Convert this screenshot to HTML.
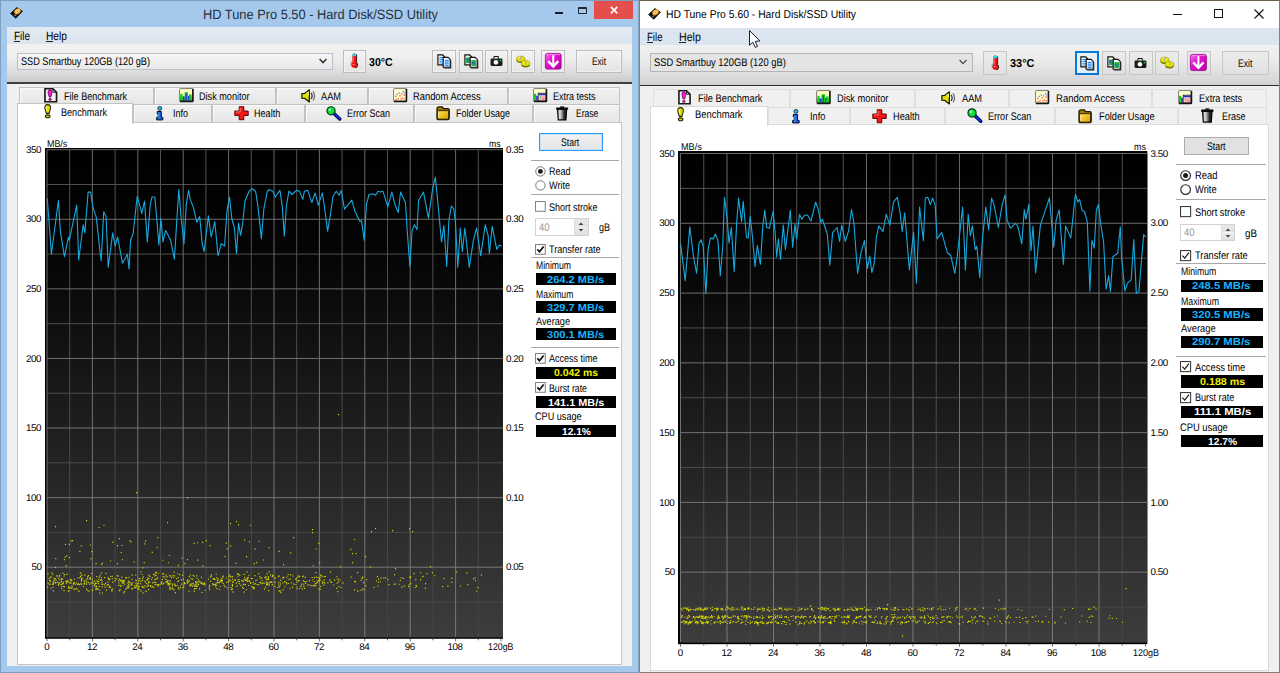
<!DOCTYPE html>
<html><head><meta charset="utf-8"><title>HD Tune Pro</title><style>
html,body{margin:0;padding:0;}
body{width:1280px;height:673px;overflow:hidden;background:#fff;font-family:"Liberation Sans", sans-serif;position:relative;}
#r{position:absolute;left:0;top:0;width:1280px;height:673px;overflow:hidden;}
#r div,#r span,#r svg{position:absolute;}
.t{white-space:pre;line-height:1;color:#000;text-rendering:geometricPrecision;}
.ic{overflow:visible;}
.win8{left:0;top:0;width:639px;height:673px;background:#a5c9ec;box-sizing:border-box;border:1px solid #7f9fc2;border-right-color:#8aa3bd;}
.w8client{left:7px;top:27px;width:625px;height:639px;background:#f0f0f0;}
.w8menu{left:7px;top:27px;width:625px;height:17px;background:linear-gradient(#e3eaf2,#dbe5ef);}
.w8tool{left:7px;top:44px;width:625px;height:39px;background:linear-gradient(#f2f1f0 0%,#eeeeee 35%,#dedede 70%,#c8c8c8 100%);}
.w8toolline{left:7px;top:82.35px;width:625px;height:1.3px;background:#404040;}
.tab8{box-sizing:border-box;border:1px solid #c2c2c2;border-bottom:none;background:linear-gradient(#f2f2f2,#e6e6e6);box-shadow:inset 1px 1px 0 #fafafa;}
.pane8{box-sizing:border-box;border:1px solid #c4c4c4;background:#fff;}
.sel8{box-sizing:border-box;border:1px solid #c4c4c4;border-bottom:none;background:#fff;}
.win10{left:639px;top:0;width:641px;height:673px;background:#f0f0f0;box-sizing:border-box;border:1px solid #8b7f6e;border-top-color:#6a5d4c;}
.w10title{left:640px;top:1px;width:639px;height:27px;background:#fff;}
.w10menu{left:640px;top:28px;width:639px;height:16.6px;background:#dbe5ef;}
.w10tool{left:640px;top:44.6px;width:639px;height:40px;background:linear-gradient(#f1f1f1 0%,#ebebeb 40%,#d2d2d2 100%);}
.w10toolline{left:640px;top:84.6px;width:639px;height:1.4px;background:#2c2c2c;}
.tab10{box-sizing:border-box;border:1px solid #dfdfdf;border-bottom:none;background:#f0f0f0;}
.pane10{box-sizing:border-box;border:1px solid #dadada;background:#fff;}
.sel10{box-sizing:border-box;border:1px solid #dadada;border-bottom:none;background:#fff;}
</style></head><body><div id="r">
<svg class="ic" style="left:0;top:0" width="0" height="0"><defs><linearGradient id="pg" x1="0" y1="0" x2="1" y2="1"><stop offset="0" stop-color="#ff70f4"/><stop offset="0.4" stop-color="#e414cc"/><stop offset="1" stop-color="#b400a4"/></linearGradient><radialGradient id="plat" cx="0.5" cy="0.45" r="0.6"><stop offset="0" stop-color="#ffe9a8"/><stop offset="0.55" stop-color="#fbb845"/><stop offset="1" stop-color="#e88a18"/></radialGradient><linearGradient id="fold" x1="0" y1="0" x2="1" y2="1"><stop offset="0" stop-color="#ffe050"/><stop offset="1" stop-color="#d8a400"/></linearGradient><linearGradient id="bin" x1="0" y1="0" x2="1" y2="0"><stop offset="0" stop-color="#7a7a7a"/><stop offset="0.25" stop-color="#e4e4e4"/><stop offset="0.5" stop-color="#8c8c8c"/><stop offset="0.72" stop-color="#2a2a2a"/><stop offset="1" stop-color="#1a1a1a"/></linearGradient></defs></svg>
<div class="win8"></div>
<div class="w8client"></div>
<div class="w8menu"></div>
<div class="w8tool"></div>
<div class="w8toolline"></div>
<svg class="ic" style="left:9.6px;top:7.2px" width="13" height="11.8" viewBox="0 0 13 12" preserveAspectRatio="none">
<polygon points="0.6,6.6 6.9,0.6 12.4,4.3 5.8,11.4" fill="#14110e" stroke="#14110e" stroke-width="0.9" stroke-linejoin="round"/>
<ellipse cx="7.5" cy="4.5" rx="3.5" ry="2.6" transform="rotate(-36 7.5 4.5)" fill="url(#plat)"/>
<ellipse cx="7.6" cy="4.3" rx="0.9" ry="0.7" transform="rotate(-36 7.6 4.3)" fill="#8c9cc0"/>
<ellipse cx="5.3" cy="8.3" rx="1.3" ry="0.6" transform="rotate(-36 5.3 8.3)" fill="#c88a58"/>
</svg>
<span class="t" style="left:202.50px;top:8px;font-size:13.6px;color:#25303c;transform:scaleX(0.9427);transform-origin:0 0;">HD Tune Pro 5.50 - Hard Disk/SSD Utility</span>
<span class="t" style="left:13.50px;top:30px;font-size:12px;transform:scaleX(0.8271);transform-origin:0 0;">File</span>
<span class="t" style="left:45.50px;top:30px;font-size:12px;transform:scaleX(0.8506);transform-origin:0 0;">Help</span>
<div style="left:13.5px;top:40.8px;width:6px;height:1px;background:#222;"></div>
<div style="left:45.5px;top:40.8px;width:7.5px;height:1px;background:#222;"></div>
<div style="left:594px;top:1.2px;width:39px;height:17.4px;background:#e44f4b;"></div>
<svg class="ic" style="left:609.6px;top:6.4px" width="8.2" height="8.2" viewBox="0 0 8.2 8.2"><path d="M0.9,0.9 L7.3,7.3 M7.3,0.9 L0.9,7.3" stroke="#fff" stroke-width="1.7"/></svg>
<div style="left:555px;top:11.5px;width:7.5px;height:2.1px;background:#151a20;border-radius:0.5px;"></div>
<div style="left:577.9px;top:6.6px;width:9.1px;height:7.2px;border:1.2px solid #1c2530;border-top-width:2.2px;box-sizing:border-box;border-radius:1px;"></div>
<div style="left:17px;top:52.5px;width:315.5px;height:17.0px;background:linear-gradient(#f6f6f6,#e9e9e9);border:1px solid #b9c2cc;box-sizing:border-box;"></div>
<svg class="ic" style="left:317.5px;top:57.0px" width="10" height="8" viewBox="0 0 10 8"><path d="M1.6,2 L5,5.6 L8.4,2" fill="none" stroke="#333" stroke-width="1.5"/></svg>
<span class="t" style="left:20.50px;top:57px;font-size:11px;transform:scaleX(0.8307);transform-origin:0 0;">SSD Smartbuy 120GB (120 gB)</span>
<div style="left:342.5px;top:50px;width:23.5px;height:22.5px;border:1px solid #bcbcbc;box-sizing:border-box;background:linear-gradient(#f3f3f3,#e4e4e4);box-shadow:inset 0 0 0 1px rgba(255,255,255,0.4);"></div>
<svg class="ic" style="left:350.25px;top:52.9px" width="8" height="15.3" viewBox="0 0 8 15.5" preserveAspectRatio="none">
<path d="M1.2,8.6 V12.8" stroke="#5aa4ac" stroke-width="1"/>
<rect x="2.3" y="0.5" width="4.2" height="11" rx="1.7" fill="#f01414"/>
<path d="M2.3,3.4 V2.2 Q2.3,0.5 4.4,0.5 Q6.5,0.5 6.5,2.2 V3.4 Z" fill="#20d8e4"/>
<rect x="1.5" y="9.4" width="6" height="5.5" rx="2" fill="#f01414"/>
<path d="M6.6,1.6 V9.8 Q7.7,10.4 7.6,12.6 Q7.4,14.9 5.2,15" fill="none" stroke="#2a0c0c" stroke-width="0.9"/>
<path d="M3.3,3.6 V9.6" stroke="#ff7a7a" stroke-width="0.8"/>
<rect x="2.8" y="11.2" width="1.6" height="1" fill="#ffb0b0"/>
</svg>
<div style="left:432px;top:50px;width:24px;height:22.5px;border:1px solid #bcbcbc;box-sizing:border-box;background:linear-gradient(#f3f3f3,#e4e4e4);box-shadow:inset 0 0 0 1px rgba(255,255,255,0.4);"></div>
<svg class="ic" style="left:436.75px;top:54.25px" width="14.5" height="14" viewBox="0 0 16 15" preserveAspectRatio="none">
<path d="M1,1 H6.2 L8.6,3.2 V11.6 H1 Z" fill="#fff" stroke="#111" stroke-width="1.3"/>
<path d="M2.6,3.8 H7 M2.6,5.8 H7 M2.6,7.8 H7 M2.6,9.6 H7" stroke="#2090ff" stroke-width="1.2"/>
<path d="M6.8,3.6 H12.2 L14.6,5.8 V14.2 H6.8 Z" fill="#fff" stroke="#111" stroke-width="1.3"/>
<path d="M15.2,6.6 V14.9 H7.6" fill="none" stroke="#222" stroke-width="1.1"/>
<path d="M8.4,6.8 H13 M8.4,8.7 H13 M8.4,10.6 H13 M8.4,12.4 H13" stroke="#2090ff" stroke-width="1.2"/>
</svg>
<div style="left:459px;top:50px;width:23.5px;height:22.5px;border:1px solid #bcbcbc;box-sizing:border-box;background:linear-gradient(#f3f3f3,#e4e4e4);box-shadow:inset 0 0 0 1px rgba(255,255,255,0.4);"></div>
<svg class="ic" style="left:463.5px;top:54.25px" width="14.5" height="14" viewBox="0 0 16 15" preserveAspectRatio="none">
<path d="M1,1 H6.2 L8.6,3.2 V11.6 H1 Z" fill="#fff" stroke="#111" stroke-width="1.3"/>
<rect x="2.2" y="3.8" width="5" height="6" fill="#20b040"/>
<rect x="3" y="5" width="2.2" height="2.2" fill="#3060e0"/>
<path d="M6.8,3.6 H12.2 L14.6,5.8 V14.2 H6.8 Z" fill="#fff" stroke="#111" stroke-width="1.3"/>
<path d="M15.2,6.6 V14.9 H7.6" fill="none" stroke="#222" stroke-width="1.1"/>
<rect x="8" y="6.6" width="5.4" height="6.2" fill="#20b040"/>
<rect x="9" y="8.6" width="2.4" height="2.4" fill="#3060e0"/>
</svg>
<div style="left:485px;top:50px;width:23px;height:22.5px;border:1px solid #bcbcbc;box-sizing:border-box;background:linear-gradient(#f3f3f3,#e4e4e4);box-shadow:inset 0 0 0 1px rgba(255,255,255,0.4);"></div>
<svg class="ic" style="left:490.0px;top:56.0px" width="13" height="10.5" viewBox="0 0 14 11" preserveAspectRatio="none">
<path d="M4.2,2.6 V1.2 Q4.2,0.6 4.8,0.6 H8.4 Q9,0.6 9,1.2 V2.6" fill="none" stroke="#111" stroke-width="1.1"/>
<rect x="0.6" y="2.6" width="12.8" height="7.8" rx="1.2" fill="#1a1a1a"/>
<circle cx="6.4" cy="6.6" r="2.9" fill="#e8e8e8" stroke="#000" stroke-width="0.6"/>
<circle cx="6.4" cy="6.6" r="1.6" fill="#fff"/>
<rect x="10.6" y="4" width="1.6" height="1.6" fill="#10e040"/>
</svg>
<div style="left:511px;top:50px;width:23.5px;height:22.5px;border:1px solid #bcbcbc;box-sizing:border-box;background:linear-gradient(#f3f3f3,#e4e4e4);box-shadow:inset 0 0 0 1px rgba(255,255,255,0.4);"></div>
<svg class="ic" style="left:515.5px;top:54.75px" width="14.5" height="13" viewBox="0 0 15 14" preserveAspectRatio="none">
<ellipse cx="4.9" cy="5.7" rx="4.4" ry="3" fill="#6e6c00"/>
<ellipse cx="4.9" cy="4.2" rx="4.4" ry="3" fill="#e6e400" stroke="#8a8600" stroke-width="0.5"/>
<path d="M1.9000000000000004,3.6 Q2.5000000000000004,2.0 4.300000000000001,1.8000000000000003" fill="none" stroke="#ffff80" stroke-width="0.8"/>
<rect x="4.3500000000000005" y="1.8000000000000003" width="1.2" height="3.6" fill="#a8a0ec"/>
<ellipse cx="9.9" cy="10.5" rx="4.4" ry="3" fill="#6e6c00"/>
<ellipse cx="9.9" cy="9.0" rx="4.4" ry="3" fill="#e6e400" stroke="#8a8600" stroke-width="0.5"/>
<path d="M6.9,8.4 Q7.5,6.8 9.3,6.6" fill="none" stroke="#ffff80" stroke-width="0.8"/>
<rect x="9.35" y="6.6" width="1.2" height="3.6" fill="#a8a0ec"/>
</svg>
<div style="left:541px;top:50px;width:24px;height:22.5px;border:1px solid #bcbcbc;box-sizing:border-box;background:linear-gradient(#f3f3f3,#e4e4e4);box-shadow:inset 0 0 0 1px rgba(255,255,255,0.4);"></div>
<svg class="ic" style="left:544.75px;top:53.0px" width="16.5" height="16.5" viewBox="0 0 17 17" preserveAspectRatio="none">
<rect x="0.4" y="0.4" width="16.2" height="16.2" rx="2" fill="url(#pg)" stroke="#98008a" stroke-width="0.8"/>
<path d="M1.4,1.6 H15.6" stroke="#ff9cf6" stroke-width="0.9" opacity="0.8"/>
<path d="M8.5,2.2 V12.4" stroke="#fff" stroke-width="2.1"/>
<path d="M3.3,8.3 L8.5,13.8 L13.7,8.3" fill="none" stroke="#fff" stroke-width="2.5"/>
</svg>
<div style="left:576px;top:50px;width:45.5px;height:22.5px;border:1px solid #bcbcbc;box-sizing:border-box;background:linear-gradient(#f3f3f3,#e4e4e4);box-shadow:inset 0 0 0 1px rgba(255,255,255,0.4);"></div>
<span class="t" style="left:591.50px;top:57px;font-size:11px;transform:scaleX(0.7632);transform-origin:0 0;">Exit</span>
<span class="t" style="left:368.75px;top:58px;font-size:11.5px;font-weight:bold;transform:scaleX(0.9221);transform-origin:0 0;">30°C</span>
<div class="tab8" style="left:19px;top:87px;width:134.5px;height:17px;"></div>
<div class="tab8" style="left:153.5px;top:87px;width:122.5px;height:17px;"></div>
<div class="tab8" style="left:276px;top:87px;width:91.5px;height:17px;"></div>
<div class="tab8" style="left:367.5px;top:87px;width:140.0px;height:17px;"></div>
<div class="tab8" style="left:507.5px;top:87px;width:112.0px;height:17px;"></div>
<div class="tab8" style="left:132.5px;top:104px;width:79.5px;height:18.5px;"></div>
<div class="tab8" style="left:212px;top:104px;width:93px;height:18.5px;"></div>
<div class="tab8" style="left:305px;top:104px;width:108.75px;height:18.5px;"></div>
<div class="tab8" style="left:413.75px;top:104px;width:119.25px;height:18.5px;"></div>
<div class="tab8" style="left:533px;top:104px;width:86.5px;height:18.5px;"></div>
<div class="pane8" style="left:17px;top:122px;width:604.7px;height:542.7px;"></div>
<div class="sel8" style="left:17px;top:103px;width:115.80000000000001px;height:20.5px;"></div>
<svg class="ic" style="left:44px;top:88.3px" width="13.5" height="14.5" viewBox="0 0 14 15" preserveAspectRatio="none">
<path d="M1,0.8 H9.3 L13,4.4 V14.2 H1 Z" fill="#f2f2f2" stroke="#181818" stroke-width="1.7"/>
<path d="M9.3,0.8 V4.4 H13" fill="none" stroke="#181818" stroke-width="1"/>
<path d="M6.3,1.9 C8.4,1.9 8.6,4 8.1,5.9 L7.2,9.3 L5.4,9.3 L4.5,5.9 C4,4 4.2,1.9 6.3,1.9 Z" fill="#ff18e0" stroke="#5a0050" stroke-width="0.8"/>
<ellipse cx="6.3" cy="11.8" rx="1.4" ry="1" fill="#ff18e0" stroke="#5a0050" stroke-width="0.8"/>
</svg>
<span class="t" style="left:64.00px;top:92px;font-size:11px;transform:scaleX(0.8244);transform-origin:0 0;">File Benchmark</span>
<svg class="ic" style="left:179px;top:88.3px" width="15" height="14.5" viewBox="0 0 15 15" preserveAspectRatio="none"><rect x="0.6" y="0.6" width="13.4" height="13.4" rx="0.8" fill="#ffffc0"/>
<rect x="1" y="9" width="12.2" height="4.2" fill="#10d010"/>
<rect x="1.4" y="6" width="2.2" height="7.2" fill="#10d010"/>
<rect x="5.6" y="4.4" width="3.4" height="8.8" fill="#10d010"/>
<rect x="10" y="6.6" width="2.6" height="6.6" fill="#10d010"/>
<rect x="3.8" y="8.6" width="1.7" height="4.6" fill="#3838e0"/>
<rect x="6.6" y="5.6" width="1.3" height="7.6" fill="#3838e0"/>
<rect x="9" y="8" width="1.3" height="5.2" fill="#3838e0"/>
<path d="M0.6,13.6 V1.4 Q0.6,0.6 1.4,0.6 H13.4" fill="none" stroke="#6a6a6a" stroke-width="0.9"/><path d="M13.9,0.9 V13.1 Q13.9,13.9 13.1,13.9 H0.9" fill="none" stroke="#141414" stroke-width="1.7"/></svg>
<span class="t" style="left:199.40px;top:92px;font-size:11px;transform:scaleX(0.8278);transform-origin:0 0;">Disk monitor</span>
<svg class="ic" style="left:301px;top:88.5px" width="15.5" height="14" viewBox="0 0 16 15" preserveAspectRatio="none">
<path d="M0.9,5 L3.8,4.8 L8.6,0.9 L8.6,13.9 L3.8,10 L0.9,9.8 Z" fill="#e6de00" stroke="#1c1c00" stroke-width="1.3" stroke-linejoin="round"/>
<path d="M5.4,4.6 L7.6,2.8 V7" fill="none" stroke="#ffff90" stroke-width="0.8"/>
<path d="M10.4,4.2 Q12.6,7.4 10.4,10.6" fill="none" stroke="#2c2c2c" stroke-width="1.3"/>
<path d="M12.4,2.6 Q15.6,7.4 12.4,12.2" fill="none" stroke="#6a6a6a" stroke-width="1.3"/>
</svg>
<span class="t" style="left:321.00px;top:92px;font-size:11px;transform:scaleX(0.8388);transform-origin:0 0;">AAM</span>
<svg class="ic" style="left:393px;top:88.3px" width="14.5" height="14.5" viewBox="0 0 15 15" preserveAspectRatio="none"><rect x="0.6" y="0.6" width="13.4" height="13.4" rx="0.8" fill="#ffffc8"/>
<g fill="#ff5050"><rect x="2.2" y="8" width="1.4" height="1.4"/><rect x="4.6" y="10.4" width="1.4" height="1.4"/><rect x="6.6" y="7.4" width="1.4" height="1.4"/><rect x="9" y="9.6" width="1.4" height="1.4"/><rect x="10.8" y="6.6" width="1.4" height="1.4"/><rect x="2.6" y="11.2" width="1.4" height="1.2"/><rect x="7.6" y="10.8" width="1.4" height="1.2"/><rect x="10.8" y="10.6" width="1.4" height="1.2"/></g>
<g fill="#7878ff"><rect x="3.6" y="6" width="1.4" height="1.4"/><rect x="5.8" y="4.6" width="1.4" height="1.4"/><rect x="8.2" y="5.4" width="1.4" height="1.4"/><rect x="10" y="3.2" width="1.4" height="1.4"/><rect x="11.4" y="4.6" width="1.2" height="1.2"/></g>
<path d="M0.6,13.6 V1.4 Q0.6,0.6 1.4,0.6 H13.4" fill="none" stroke="#6a6a6a" stroke-width="0.9"/><path d="M13.9,0.9 V13.1 Q13.9,13.9 13.1,13.9 H0.9" fill="none" stroke="#141414" stroke-width="1.7"/></svg>
<span class="t" style="left:413.00px;top:92px;font-size:11px;transform:scaleX(0.8505);transform-origin:0 0;">Random Access</span>
<svg class="ic" style="left:533px;top:88.3px" width="14.5" height="14.5" viewBox="0 0 15 15" preserveAspectRatio="none"><rect x="0.6" y="0.6" width="13.4" height="13.4" rx="0.8" fill="#ffffc8"/>
<rect x="1" y="6" width="2.2" height="7.2" fill="#10d010"/>
<rect x="3.2" y="8" width="1.8" height="5.2" fill="#3838e0"/>
<rect x="5.4" y="5.4" width="8" height="8" fill="#fff" stroke="#222" stroke-width="0.9"/>
<rect x="5.8" y="5.8" width="7.2" height="1.8" fill="#2030c0"/>
<rect x="6.4" y="8.2" width="6" height="4.6" fill="#ffb0b0"/>
<rect x="7" y="9" width="1.6" height="1.4" fill="#30d0c0"/><rect x="10" y="10.4" width="1.6" height="1.4" fill="#ff6060"/>
<path d="M0.6,13.6 V1.4 Q0.6,0.6 1.4,0.6 H13.4" fill="none" stroke="#6a6a6a" stroke-width="0.9"/><path d="M13.9,0.9 V13.1 Q13.9,13.9 13.1,13.9 H0.9" fill="none" stroke="#141414" stroke-width="1.7"/></svg>
<span class="t" style="left:552.50px;top:92px;font-size:11px;transform:scaleX(0.8178);transform-origin:0 0;">Extra tests</span>
<svg class="ic" style="left:44px;top:104.3px" width="7.5" height="14.5" viewBox="0 0 8 15" preserveAspectRatio="none">
<path d="M3.9,0.7 C6.5,0.7 7.3,2.6 6.8,5 L5.4,9.7 L2.5,9.7 L1,5 C0.5,2.6 1.3,0.7 3.9,0.7 Z" fill="#dede00" stroke="#26260a" stroke-width="1.15"/>
<path d="M2.7,2.2 C2.2,3.4 2.4,5 3.1,6.8" fill="none" stroke="#ffffa0" stroke-width="1"/>
<ellipse cx="4" cy="12.7" rx="2.5" ry="1.5" fill="#d0d000" stroke="#26260a" stroke-width="1.15"/>
</svg>
<span class="t" style="left:61.00px;top:108px;font-size:11px;transform:scaleX(0.8267);transform-origin:0 0;">Benchmark</span>
<svg class="ic" style="left:156px;top:105.6px" width="7.5" height="14.5" viewBox="0 0 8 15" preserveAspectRatio="none">
<circle cx="4" cy="2.5" r="2" fill="#20c8f4" stroke="#001828" stroke-width="0.9"/>
<path d="M1.3,5.7 H5.7 V11.8 H7.3 V14.4 H0.7 V11.8 H2.3 V8 H1.3 Z" fill="#1060f4" stroke="#000818" stroke-width="1" stroke-linejoin="round"/>
<path d="M3,6.5 V13.4" stroke="#58b8ff" stroke-width="0.9"/>
</svg>
<span class="t" style="left:173.00px;top:109px;font-size:11px;transform:scaleX(0.8170);transform-origin:0 0;">Info</span>
<svg class="ic" style="left:234px;top:105.6px" width="15" height="14.5" viewBox="0 0 15 15" preserveAspectRatio="none">
<path d="M5.2,0.8 H9.8 V5.2 H14.2 V9.8 H9.8 V14.2 H5.2 V9.8 H0.8 V5.2 H5.2 Z" fill="#f01818" stroke="#600000" stroke-width="1" stroke-linejoin="round"/>
<path d="M6.2,1.8 V6.2 H1.8" fill="none" stroke="#ff8080" stroke-width="0.9"/>
</svg>
<span class="t" style="left:254.40px;top:109px;font-size:11px;transform:scaleX(0.8240);transform-origin:0 0;">Health</span>
<svg class="ic" style="left:326px;top:105.6px" width="15.5" height="14.5" viewBox="0 0 16 15" preserveAspectRatio="none">
<path d="M7.6,7.2 L14.2,13.4" stroke="#00004a" stroke-width="3.6" stroke-linecap="round"/>
<path d="M7.8,7.4 L14,13.2" stroke="#1030d8" stroke-width="1.9" stroke-linecap="round"/>
<circle cx="5.2" cy="5" r="4.2" fill="#10e040" stroke="#063a10" stroke-width="1.2"/>
<circle cx="4" cy="3.8" r="1.3" fill="#a0ffb0"/>
</svg>
<span class="t" style="left:347.00px;top:109px;font-size:11px;transform:scaleX(0.8178);transform-origin:0 0;">Error Scan</span>
<svg class="ic" style="left:435.6px;top:105.6px" width="14" height="14.5" viewBox="0 0 14 15" preserveAspectRatio="none">
<path d="M1,2.8 Q1,1 2.8,1 H6.2 L7.8,2.8 H11.8 Q13.2,2.8 13.2,4.2 V12.8 Q13.2,14.2 11.8,14.2 H2.4 Q1,14.2 1,12.8 Z" fill="#a07800" stroke="#241800" stroke-width="1.3"/>
<path d="M2.8,4.8 H11.4 Q12.6,4.8 12.6,6 V12.4 Q12.6,13.6 11.4,13.6 H2.8 Q1.6,13.6 1.6,12.4 V6 Q1.6,4.8 2.8,4.8 Z" fill="url(#fold)" stroke="#241800" stroke-width="0.9"/>
<path d="M2.7,6 V12.4" stroke="#fff0a0" stroke-width="0.9"/>
</svg>
<span class="t" style="left:456.00px;top:109px;font-size:11px;transform:scaleX(0.8176);transform-origin:0 0;">Folder Usage</span>
<svg class="ic" style="left:555.6px;top:105.6px" width="12.2" height="14.5" viewBox="0 0 13 15" preserveAspectRatio="none">
<path d="M1.6,3.4 H11.4 L10.6,14.3 H2.4 Z" fill="url(#bin)" stroke="#000" stroke-width="1.2"/>
<path d="M0.5,1.9 H12.5 V3.6 H0.5 Z" fill="#111" stroke="#000" stroke-width="0.7"/>
<rect x="4.4" y="0.4" width="4.2" height="1.8" fill="#111"/>
</svg>
<span class="t" style="left:575.60px;top:109px;font-size:11px;transform:scaleX(0.7791);transform-origin:0 0;">Erase</span>
<svg class="ic" style="left:45px;top:148px" width="458" height="490.79999999999995" viewBox="45 148 458 490.79999999999995"><defs><linearGradient id="bgL" x1="0" y1="0" x2="0" y2="1"><stop offset="0" stop-color="#000"/><stop offset="0.22" stop-color="#050505"/><stop offset="1" stop-color="#3d3d3d"/></linearGradient><linearGradient id="mnL" gradientUnits="userSpaceOnUse" x1="0" y1="149.7" x2="0" y2="636.8"><stop offset="0" stop-color="#525252"/><stop offset="1" stop-color="#444444"/></linearGradient><linearGradient id="mjL" gradientUnits="userSpaceOnUse" x1="0" y1="149.7" x2="0" y2="636.8"><stop offset="0" stop-color="#686868"/><stop offset="1" stop-color="#787878"/></linearGradient></defs><rect x="45" y="148" width="458" height="490.79999999999995" fill="#000"/><rect x="47" y="149.7" width="456" height="487.7" fill="url(#bgL)"/><path d="M69.70,149.7 V636.8M115.10,149.7 V636.8M160.50,149.7 V636.8M205.90,149.7 V636.8M251.30,149.7 V636.8M296.70,149.7 V636.8M342.10,149.7 V636.8M387.50,149.7 V636.8M432.90,149.7 V636.8M478.30,149.7 V636.8M47,184.49 H503M47,254.08 H503M47,323.66 H503M47,393.25 H503M47,462.84 H503M47,532.42 H503M47,602.01 H503" stroke="url(#mnL)" stroke-width="1" fill="none"/><path d="M47.00,149.7 V636.8M92.40,149.7 V636.8M137.80,149.7 V636.8M183.20,149.7 V636.8M228.60,149.7 V636.8M274.00,149.7 V636.8M319.40,149.7 V636.8M364.80,149.7 V636.8M410.20,149.7 V636.8M455.60,149.7 V636.8M47,149.70 H503M47,219.29 H503M47,288.87 H503M47,358.46 H503M47,428.04 H503M47,497.63 H503M47,567.21 H503" stroke="url(#mjL)" stroke-width="1" fill="none"/><path d="M77.1,583.9h1.15v1.15h-1.15zM61.0,578.1h1.15v1.15h-1.15zM107.5,577.2h1.15v1.15h-1.15zM53.7,579.6h1.15v1.15h-1.15zM96.8,581.4h1.15v1.15h-1.15zM81.0,578.3h1.15v1.15h-1.15zM52.4,581.7h1.15v1.15h-1.15zM94.2,585.4h1.15v1.15h-1.15zM50.5,587.5h1.15v1.15h-1.15zM87.3,590.1h1.15v1.15h-1.15zM53.5,577.7h1.15v1.15h-1.15zM55.4,579.5h1.15v1.15h-1.15zM86.5,581.7h1.15v1.15h-1.15zM123.9,591.1h1.15v1.15h-1.15zM58.5,582.7h1.15v1.15h-1.15zM67.8,590.6h1.15v1.15h-1.15zM105.4,572.8h1.15v1.15h-1.15zM135.1,574.4h1.15v1.15h-1.15zM100.7,572.5h1.15v1.15h-1.15zM83.9,583.1h1.15v1.15h-1.15zM137.8,587.6h1.15v1.15h-1.15zM51.3,572.3h1.15v1.15h-1.15zM126.8,585.6h1.15v1.15h-1.15zM73.9,582.6h1.15v1.15h-1.15zM60.4,584.0h1.15v1.15h-1.15zM58.0,583.8h1.15v1.15h-1.15zM75.7,588.1h1.15v1.15h-1.15zM122.9,580.5h1.15v1.15h-1.15zM63.8,586.0h1.15v1.15h-1.15zM101.1,579.6h1.15v1.15h-1.15zM106.4,585.2h1.15v1.15h-1.15zM81.6,577.5h1.15v1.15h-1.15zM97.9,581.1h1.15v1.15h-1.15zM52.8,590.3h1.15v1.15h-1.15zM52.5,583.8h1.15v1.15h-1.15zM66.2,580.8h1.15v1.15h-1.15zM110.3,575.9h1.15v1.15h-1.15zM86.8,577.6h1.15v1.15h-1.15zM76.2,582.6h1.15v1.15h-1.15zM101.5,586.3h1.15v1.15h-1.15zM89.1,583.7h1.15v1.15h-1.15zM74.9,584.2h1.15v1.15h-1.15zM120.9,581.4h1.15v1.15h-1.15zM112.0,588.4h1.15v1.15h-1.15zM69.7,579.6h1.15v1.15h-1.15zM100.4,578.9h1.15v1.15h-1.15zM95.8,586.0h1.15v1.15h-1.15zM128.4,581.9h1.15v1.15h-1.15zM114.8,580.2h1.15v1.15h-1.15zM73.8,578.7h1.15v1.15h-1.15zM138.2,580.3h1.15v1.15h-1.15zM58.0,584.7h1.15v1.15h-1.15zM85.9,583.4h1.15v1.15h-1.15zM117.4,575.6h1.15v1.15h-1.15zM61.1,583.7h1.15v1.15h-1.15zM92.5,582.5h1.15v1.15h-1.15zM50.6,576.6h1.15v1.15h-1.15zM109.1,585.5h1.15v1.15h-1.15zM118.1,580.2h1.15v1.15h-1.15zM100.3,579.9h1.15v1.15h-1.15zM128.4,585.6h1.15v1.15h-1.15zM76.2,588.2h1.15v1.15h-1.15zM111.7,578.2h1.15v1.15h-1.15zM102.3,583.8h1.15v1.15h-1.15zM100.9,577.2h1.15v1.15h-1.15zM89.4,578.2h1.15v1.15h-1.15zM125.1,577.3h1.15v1.15h-1.15zM134.9,579.7h1.15v1.15h-1.15zM91.1,573.0h1.15v1.15h-1.15zM108.8,586.6h1.15v1.15h-1.15zM52.6,586.4h1.15v1.15h-1.15zM112.2,581.5h1.15v1.15h-1.15zM107.2,584.2h1.15v1.15h-1.15zM139.4,589.2h1.15v1.15h-1.15zM123.4,581.8h1.15v1.15h-1.15zM73.5,582.1h1.15v1.15h-1.15zM82.9,585.9h1.15v1.15h-1.15zM109.2,578.6h1.15v1.15h-1.15zM49.1,583.8h1.15v1.15h-1.15zM89.9,577.0h1.15v1.15h-1.15zM62.6,585.7h1.15v1.15h-1.15zM57.9,577.9h1.15v1.15h-1.15zM52.5,582.1h1.15v1.15h-1.15zM118.4,582.3h1.15v1.15h-1.15zM59.0,574.8h1.15v1.15h-1.15zM70.0,579.3h1.15v1.15h-1.15zM83.4,583.4h1.15v1.15h-1.15zM128.0,580.4h1.15v1.15h-1.15zM54.5,578.1h1.15v1.15h-1.15zM88.8,578.3h1.15v1.15h-1.15zM98.1,578.8h1.15v1.15h-1.15zM129.2,581.5h1.15v1.15h-1.15zM123.2,580.3h1.15v1.15h-1.15zM127.4,587.5h1.15v1.15h-1.15zM72.9,583.7h1.15v1.15h-1.15zM85.6,580.5h1.15v1.15h-1.15zM80.4,572.6h1.15v1.15h-1.15zM129.2,582.1h1.15v1.15h-1.15zM136.1,584.8h1.15v1.15h-1.15zM61.0,580.9h1.15v1.15h-1.15zM63.4,590.0h1.15v1.15h-1.15zM68.6,590.2h1.15v1.15h-1.15zM68.7,587.3h1.15v1.15h-1.15zM92.1,580.7h1.15v1.15h-1.15zM101.8,592.4h1.15v1.15h-1.15zM71.4,585.4h1.15v1.15h-1.15zM47.4,573.3h1.15v1.15h-1.15zM86.0,588.6h1.15v1.15h-1.15zM81.3,574.8h1.15v1.15h-1.15zM99.7,575.2h1.15v1.15h-1.15zM135.6,586.3h1.15v1.15h-1.15zM111.2,589.0h1.15v1.15h-1.15zM94.9,582.5h1.15v1.15h-1.15zM104.4,586.6h1.15v1.15h-1.15zM109.9,586.9h1.15v1.15h-1.15zM52.0,573.9h1.15v1.15h-1.15zM130.7,583.0h1.15v1.15h-1.15zM119.5,584.8h1.15v1.15h-1.15zM128.3,576.7h1.15v1.15h-1.15zM121.2,585.2h1.15v1.15h-1.15zM83.5,579.7h1.15v1.15h-1.15zM84.1,583.3h1.15v1.15h-1.15zM56.6,581.7h1.15v1.15h-1.15zM106.0,589.6h1.15v1.15h-1.15zM52.8,582.8h1.15v1.15h-1.15zM53.3,580.7h1.15v1.15h-1.15zM66.4,573.8h1.15v1.15h-1.15zM62.1,578.4h1.15v1.15h-1.15zM78.6,590.9h1.15v1.15h-1.15zM51.9,583.9h1.15v1.15h-1.15zM47.0,586.6h1.15v1.15h-1.15zM61.1,586.2h1.15v1.15h-1.15zM56.4,574.9h1.15v1.15h-1.15zM80.8,579.4h1.15v1.15h-1.15zM49.4,579.8h1.15v1.15h-1.15zM128.3,586.5h1.15v1.15h-1.15zM104.1,577.0h1.15v1.15h-1.15zM60.8,579.0h1.15v1.15h-1.15zM70.5,578.7h1.15v1.15h-1.15zM79.3,577.0h1.15v1.15h-1.15zM80.9,580.6h1.15v1.15h-1.15zM58.4,582.0h1.15v1.15h-1.15zM126.0,577.3h1.15v1.15h-1.15zM139.4,577.7h1.15v1.15h-1.15zM90.3,582.4h1.15v1.15h-1.15zM92.0,590.1h1.15v1.15h-1.15zM55.0,582.6h1.15v1.15h-1.15zM56.5,576.2h1.15v1.15h-1.15zM78.9,584.0h1.15v1.15h-1.15zM71.6,586.7h1.15v1.15h-1.15zM124.1,583.7h1.15v1.15h-1.15zM62.0,583.2h1.15v1.15h-1.15zM49.1,579.6h1.15v1.15h-1.15zM135.4,582.5h1.15v1.15h-1.15zM96.1,576.0h1.15v1.15h-1.15zM60.6,583.7h1.15v1.15h-1.15zM97.5,588.5h1.15v1.15h-1.15zM49.5,583.4h1.15v1.15h-1.15zM96.1,588.7h1.15v1.15h-1.15zM138.0,585.6h1.15v1.15h-1.15zM127.3,582.6h1.15v1.15h-1.15zM111.7,575.7h1.15v1.15h-1.15zM71.3,587.2h1.15v1.15h-1.15zM81.1,583.6h1.15v1.15h-1.15zM62.5,572.8h1.15v1.15h-1.15zM118.8,590.1h1.15v1.15h-1.15zM96.5,588.1h1.15v1.15h-1.15zM119.5,589.0h1.15v1.15h-1.15zM77.7,589.7h1.15v1.15h-1.15zM67.7,581.4h1.15v1.15h-1.15zM122.5,582.9h1.15v1.15h-1.15zM138.6,578.6h1.15v1.15h-1.15zM126.3,587.4h1.15v1.15h-1.15zM122.0,580.9h1.15v1.15h-1.15zM123.1,592.3h1.15v1.15h-1.15zM115.8,578.6h1.15v1.15h-1.15zM68.1,586.1h1.15v1.15h-1.15zM95.1,589.2h1.15v1.15h-1.15zM80.1,583.3h1.15v1.15h-1.15zM49.7,580.8h1.15v1.15h-1.15zM49.6,576.6h1.15v1.15h-1.15zM73.0,588.4h1.15v1.15h-1.15zM71.1,587.4h1.15v1.15h-1.15zM111.4,590.5h1.15v1.15h-1.15zM136.0,580.2h1.15v1.15h-1.15zM88.6,590.7h1.15v1.15h-1.15zM134.1,585.3h1.15v1.15h-1.15zM138.9,586.2h1.15v1.15h-1.15zM135.8,584.6h1.15v1.15h-1.15zM80.9,580.0h1.15v1.15h-1.15zM67.5,581.1h1.15v1.15h-1.15zM68.1,587.5h1.15v1.15h-1.15zM65.3,581.0h1.15v1.15h-1.15zM66.0,582.8h1.15v1.15h-1.15zM105.0,582.8h1.15v1.15h-1.15zM130.7,584.3h1.15v1.15h-1.15zM125.2,588.6h1.15v1.15h-1.15zM91.6,578.7h1.15v1.15h-1.15zM107.7,584.0h1.15v1.15h-1.15zM121.4,579.7h1.15v1.15h-1.15zM54.9,582.1h1.15v1.15h-1.15zM108.4,579.2h1.15v1.15h-1.15zM131.6,574.6h1.15v1.15h-1.15zM119.8,580.2h1.15v1.15h-1.15zM116.8,575.1h1.15v1.15h-1.15zM91.5,589.4h1.15v1.15h-1.15zM63.6,575.4h1.15v1.15h-1.15zM120.4,579.4h1.15v1.15h-1.15zM77.9,583.3h1.15v1.15h-1.15zM121.5,580.0h1.15v1.15h-1.15zM137.4,588.6h1.15v1.15h-1.15zM83.8,581.3h1.15v1.15h-1.15zM84.3,574.6h1.15v1.15h-1.15zM135.1,587.1h1.15v1.15h-1.15zM114.4,580.2h1.15v1.15h-1.15zM62.8,583.0h1.15v1.15h-1.15zM58.8,576.2h1.15v1.15h-1.15zM61.1,588.1h1.15v1.15h-1.15zM131.2,578.7h1.15v1.15h-1.15zM122.0,582.7h1.15v1.15h-1.15zM60.6,581.5h1.15v1.15h-1.15zM123.9,580.0h1.15v1.15h-1.15zM138.2,583.2h1.15v1.15h-1.15zM108.1,578.1h1.15v1.15h-1.15zM79.6,572.4h1.15v1.15h-1.15zM98.0,583.1h1.15v1.15h-1.15zM59.2,579.4h1.15v1.15h-1.15zM48.3,577.9h1.15v1.15h-1.15zM137.3,582.9h1.15v1.15h-1.15zM107.4,581.6h1.15v1.15h-1.15zM96.0,585.7h1.15v1.15h-1.15zM133.8,587.2h1.15v1.15h-1.15zM87.3,576.1h1.15v1.15h-1.15zM128.1,584.1h1.15v1.15h-1.15zM123.8,583.7h1.15v1.15h-1.15zM66.6,580.0h1.15v1.15h-1.15zM70.4,582.6h1.15v1.15h-1.15zM74.2,588.8h1.15v1.15h-1.15zM69.4,582.0h1.15v1.15h-1.15zM101.5,581.7h1.15v1.15h-1.15zM71.1,580.1h1.15v1.15h-1.15zM86.0,583.5h1.15v1.15h-1.15zM59.2,579.4h1.15v1.15h-1.15zM131.6,584.4h1.15v1.15h-1.15zM79.9,575.8h1.15v1.15h-1.15zM89.6,578.3h1.15v1.15h-1.15zM101.3,583.6h1.15v1.15h-1.15zM131.1,588.3h1.15v1.15h-1.15zM86.1,578.9h1.15v1.15h-1.15zM132.3,582.0h1.15v1.15h-1.15zM93.7,585.0h1.15v1.15h-1.15zM96.5,580.2h1.15v1.15h-1.15zM95.7,582.9h1.15v1.15h-1.15zM48.7,583.4h1.15v1.15h-1.15zM87.9,575.1h1.15v1.15h-1.15zM64.0,573.9h1.15v1.15h-1.15zM47.4,582.6h1.15v1.15h-1.15zM121.3,576.6h1.15v1.15h-1.15zM63.0,581.5h1.15v1.15h-1.15zM91.0,582.4h1.15v1.15h-1.15zM114.4,577.7h1.15v1.15h-1.15zM98.8,576.5h1.15v1.15h-1.15zM77.3,577.4h1.15v1.15h-1.15zM95.2,587.4h1.15v1.15h-1.15zM98.7,585.8h1.15v1.15h-1.15zM119.9,585.7h1.15v1.15h-1.15zM56.9,581.7h1.15v1.15h-1.15zM99.1,592.4h1.15v1.15h-1.15zM70.1,587.5h1.15v1.15h-1.15zM72.8,583.3h1.15v1.15h-1.15zM118.8,578.5h1.15v1.15h-1.15zM94.2,583.7h1.15v1.15h-1.15zM99.2,589.7h1.15v1.15h-1.15zM117.7,584.7h1.15v1.15h-1.15zM131.9,587.9h1.15v1.15h-1.15zM88.2,582.1h1.15v1.15h-1.15zM104.0,584.2h1.15v1.15h-1.15zM94.0,580.6h1.15v1.15h-1.15zM94.6,583.7h1.15v1.15h-1.15zM216.2,588.1h1.15v1.15h-1.15zM189.8,574.4h1.15v1.15h-1.15zM198.7,581.3h1.15v1.15h-1.15zM192.6,582.8h1.15v1.15h-1.15zM243.6,578.7h1.15v1.15h-1.15zM216.9,580.1h1.15v1.15h-1.15zM236.4,585.5h1.15v1.15h-1.15zM243.6,591.6h1.15v1.15h-1.15zM168.6,584.7h1.15v1.15h-1.15zM201.5,583.2h1.15v1.15h-1.15zM243.8,573.8h1.15v1.15h-1.15zM232.4,591.2h1.15v1.15h-1.15zM155.1,582.0h1.15v1.15h-1.15zM153.4,581.4h1.15v1.15h-1.15zM188.6,576.0h1.15v1.15h-1.15zM148.0,581.3h1.15v1.15h-1.15zM166.5,576.1h1.15v1.15h-1.15zM148.0,582.0h1.15v1.15h-1.15zM213.6,583.9h1.15v1.15h-1.15zM226.2,581.8h1.15v1.15h-1.15zM238.7,583.0h1.15v1.15h-1.15zM157.0,577.3h1.15v1.15h-1.15zM218.8,588.7h1.15v1.15h-1.15zM212.6,578.3h1.15v1.15h-1.15zM155.7,572.5h1.15v1.15h-1.15zM237.1,580.7h1.15v1.15h-1.15zM246.4,577.8h1.15v1.15h-1.15zM164.2,576.6h1.15v1.15h-1.15zM244.8,579.8h1.15v1.15h-1.15zM183.8,583.1h1.15v1.15h-1.15zM193.6,575.7h1.15v1.15h-1.15zM248.9,580.9h1.15v1.15h-1.15zM231.6,588.7h1.15v1.15h-1.15zM157.8,585.0h1.15v1.15h-1.15zM187.5,580.8h1.15v1.15h-1.15zM196.7,582.2h1.15v1.15h-1.15zM177.3,581.0h1.15v1.15h-1.15zM161.5,581.4h1.15v1.15h-1.15zM175.0,585.3h1.15v1.15h-1.15zM219.4,581.1h1.15v1.15h-1.15zM142.1,586.0h1.15v1.15h-1.15zM200.9,576.8h1.15v1.15h-1.15zM188.5,590.7h1.15v1.15h-1.15zM142.0,579.8h1.15v1.15h-1.15zM176.5,584.9h1.15v1.15h-1.15zM208.6,587.5h1.15v1.15h-1.15zM196.3,577.7h1.15v1.15h-1.15zM147.1,579.0h1.15v1.15h-1.15zM248.4,574.7h1.15v1.15h-1.15zM226.7,587.2h1.15v1.15h-1.15zM246.9,580.9h1.15v1.15h-1.15zM151.5,585.7h1.15v1.15h-1.15zM169.2,575.1h1.15v1.15h-1.15zM144.4,585.0h1.15v1.15h-1.15zM225.7,577.4h1.15v1.15h-1.15zM169.7,580.6h1.15v1.15h-1.15zM154.3,575.2h1.15v1.15h-1.15zM186.4,580.4h1.15v1.15h-1.15zM240.3,584.8h1.15v1.15h-1.15zM230.1,580.2h1.15v1.15h-1.15zM168.4,580.2h1.15v1.15h-1.15zM156.4,584.0h1.15v1.15h-1.15zM241.1,580.1h1.15v1.15h-1.15zM202.8,583.9h1.15v1.15h-1.15zM217.0,582.0h1.15v1.15h-1.15zM149.8,585.7h1.15v1.15h-1.15zM146.3,579.6h1.15v1.15h-1.15zM215.7,582.4h1.15v1.15h-1.15zM186.8,582.5h1.15v1.15h-1.15zM148.0,589.0h1.15v1.15h-1.15zM243.2,583.6h1.15v1.15h-1.15zM209.8,576.4h1.15v1.15h-1.15zM228.2,575.8h1.15v1.15h-1.15zM149.2,581.4h1.15v1.15h-1.15zM234.2,579.8h1.15v1.15h-1.15zM147.3,577.6h1.15v1.15h-1.15zM234.9,579.0h1.15v1.15h-1.15zM189.9,585.4h1.15v1.15h-1.15zM177.3,573.2h1.15v1.15h-1.15zM200.8,583.0h1.15v1.15h-1.15zM241.9,580.4h1.15v1.15h-1.15zM169.5,589.1h1.15v1.15h-1.15zM154.2,573.4h1.15v1.15h-1.15zM198.0,583.8h1.15v1.15h-1.15zM166.2,580.8h1.15v1.15h-1.15zM152.0,582.3h1.15v1.15h-1.15zM157.8,583.9h1.15v1.15h-1.15zM145.5,591.1h1.15v1.15h-1.15zM162.2,583.7h1.15v1.15h-1.15zM174.3,584.3h1.15v1.15h-1.15zM173.6,575.0h1.15v1.15h-1.15zM223.5,584.8h1.15v1.15h-1.15zM171.9,575.3h1.15v1.15h-1.15zM195.0,581.1h1.15v1.15h-1.15zM159.6,583.8h1.15v1.15h-1.15zM178.2,588.5h1.15v1.15h-1.15zM142.0,586.5h1.15v1.15h-1.15zM167.5,582.8h1.15v1.15h-1.15zM141.7,585.8h1.15v1.15h-1.15zM220.6,580.7h1.15v1.15h-1.15zM200.6,582.1h1.15v1.15h-1.15zM160.8,581.4h1.15v1.15h-1.15zM192.2,585.7h1.15v1.15h-1.15zM242.8,580.6h1.15v1.15h-1.15zM151.7,576.9h1.15v1.15h-1.15zM230.1,576.1h1.15v1.15h-1.15zM187.5,581.7h1.15v1.15h-1.15zM194.5,585.7h1.15v1.15h-1.15zM231.8,576.0h1.15v1.15h-1.15zM183.2,586.7h1.15v1.15h-1.15zM195.7,582.6h1.15v1.15h-1.15zM215.7,573.7h1.15v1.15h-1.15zM248.1,584.9h1.15v1.15h-1.15zM177.7,577.1h1.15v1.15h-1.15zM231.6,588.0h1.15v1.15h-1.15zM217.7,578.2h1.15v1.15h-1.15zM210.0,580.8h1.15v1.15h-1.15zM184.5,583.0h1.15v1.15h-1.15zM178.2,579.9h1.15v1.15h-1.15zM146.0,582.9h1.15v1.15h-1.15zM154.3,578.8h1.15v1.15h-1.15zM147.8,585.0h1.15v1.15h-1.15zM221.5,581.6h1.15v1.15h-1.15zM168.1,582.7h1.15v1.15h-1.15zM158.0,572.7h1.15v1.15h-1.15zM149.3,575.8h1.15v1.15h-1.15zM232.5,581.9h1.15v1.15h-1.15zM235.8,582.5h1.15v1.15h-1.15zM213.8,578.5h1.15v1.15h-1.15zM171.0,577.0h1.15v1.15h-1.15zM166.6,581.8h1.15v1.15h-1.15zM172.2,583.5h1.15v1.15h-1.15zM190.5,578.2h1.15v1.15h-1.15zM157.3,585.4h1.15v1.15h-1.15zM189.0,580.2h1.15v1.15h-1.15zM169.0,583.3h1.15v1.15h-1.15zM245.8,589.2h1.15v1.15h-1.15zM247.0,579.2h1.15v1.15h-1.15zM200.2,581.6h1.15v1.15h-1.15zM166.9,580.3h1.15v1.15h-1.15zM246.2,580.0h1.15v1.15h-1.15zM174.1,583.4h1.15v1.15h-1.15zM179.2,574.1h1.15v1.15h-1.15zM140.1,583.2h1.15v1.15h-1.15zM182.0,574.8h1.15v1.15h-1.15zM192.2,578.5h1.15v1.15h-1.15zM195.3,585.6h1.15v1.15h-1.15zM162.1,573.3h1.15v1.15h-1.15zM195.5,588.1h1.15v1.15h-1.15zM140.5,590.6h1.15v1.15h-1.15zM169.1,587.0h1.15v1.15h-1.15zM149.9,585.0h1.15v1.15h-1.15zM183.9,582.1h1.15v1.15h-1.15zM144.6,580.7h1.15v1.15h-1.15zM142.5,592.3h1.15v1.15h-1.15zM173.5,576.7h1.15v1.15h-1.15zM165.6,581.6h1.15v1.15h-1.15zM204.4,584.3h1.15v1.15h-1.15zM198.2,579.2h1.15v1.15h-1.15zM222.6,575.6h1.15v1.15h-1.15zM212.3,583.1h1.15v1.15h-1.15zM218.8,581.8h1.15v1.15h-1.15zM236.7,573.2h1.15v1.15h-1.15zM182.8,578.8h1.15v1.15h-1.15zM175.9,577.9h1.15v1.15h-1.15zM248.3,580.3h1.15v1.15h-1.15zM156.4,584.2h1.15v1.15h-1.15zM219.7,585.7h1.15v1.15h-1.15zM210.8,575.5h1.15v1.15h-1.15zM144.8,581.4h1.15v1.15h-1.15zM231.9,578.6h1.15v1.15h-1.15zM238.1,573.6h1.15v1.15h-1.15zM209.0,584.8h1.15v1.15h-1.15zM220.7,579.3h1.15v1.15h-1.15zM229.3,580.4h1.15v1.15h-1.15zM155.3,571.5h1.15v1.15h-1.15zM197.6,584.1h1.15v1.15h-1.15zM195.5,581.8h1.15v1.15h-1.15zM231.8,584.9h1.15v1.15h-1.15zM228.5,579.1h1.15v1.15h-1.15zM230.9,589.0h1.15v1.15h-1.15zM204.2,583.2h1.15v1.15h-1.15zM238.2,579.2h1.15v1.15h-1.15zM215.1,583.7h1.15v1.15h-1.15zM216.3,584.7h1.15v1.15h-1.15zM165.3,578.8h1.15v1.15h-1.15zM143.4,587.0h1.15v1.15h-1.15zM154.6,584.0h1.15v1.15h-1.15zM179.7,585.4h1.15v1.15h-1.15zM151.5,586.7h1.15v1.15h-1.15zM231.9,585.7h1.15v1.15h-1.15zM201.4,591.9h1.15v1.15h-1.15zM209.1,589.2h1.15v1.15h-1.15zM208.9,585.6h1.15v1.15h-1.15zM214.9,584.5h1.15v1.15h-1.15zM193.8,590.5h1.15v1.15h-1.15zM140.4,580.7h1.15v1.15h-1.15zM227.7,581.0h1.15v1.15h-1.15zM222.3,576.3h1.15v1.15h-1.15zM195.3,584.0h1.15v1.15h-1.15zM198.9,588.3h1.15v1.15h-1.15zM212.5,584.3h1.15v1.15h-1.15zM147.3,583.7h1.15v1.15h-1.15zM221.0,580.6h1.15v1.15h-1.15zM167.7,582.4h1.15v1.15h-1.15zM148.2,574.5h1.15v1.15h-1.15zM169.2,586.8h1.15v1.15h-1.15zM220.2,579.6h1.15v1.15h-1.15zM162.6,576.1h1.15v1.15h-1.15zM221.4,577.8h1.15v1.15h-1.15zM247.3,577.5h1.15v1.15h-1.15zM194.3,585.9h1.15v1.15h-1.15zM182.1,586.9h1.15v1.15h-1.15zM192.7,574.8h1.15v1.15h-1.15zM215.2,586.2h1.15v1.15h-1.15zM224.4,586.0h1.15v1.15h-1.15zM207.9,578.7h1.15v1.15h-1.15zM210.7,574.2h1.15v1.15h-1.15zM148.5,577.9h1.15v1.15h-1.15zM156.2,578.4h1.15v1.15h-1.15zM167.9,583.3h1.15v1.15h-1.15zM221.8,579.8h1.15v1.15h-1.15zM173.5,571.5h1.15v1.15h-1.15zM202.5,582.8h1.15v1.15h-1.15zM141.4,573.9h1.15v1.15h-1.15zM146.7,586.1h1.15v1.15h-1.15zM169.6,575.6h1.15v1.15h-1.15zM213.9,578.1h1.15v1.15h-1.15zM216.1,577.3h1.15v1.15h-1.15zM214.3,578.9h1.15v1.15h-1.15zM172.0,588.1h1.15v1.15h-1.15zM196.8,585.9h1.15v1.15h-1.15zM191.1,584.6h1.15v1.15h-1.15zM191.3,583.2h1.15v1.15h-1.15zM153.0,573.9h1.15v1.15h-1.15zM238.3,579.0h1.15v1.15h-1.15zM161.9,578.8h1.15v1.15h-1.15zM247.6,576.7h1.15v1.15h-1.15zM243.0,584.1h1.15v1.15h-1.15zM141.9,577.9h1.15v1.15h-1.15zM190.5,578.1h1.15v1.15h-1.15zM230.2,576.4h1.15v1.15h-1.15zM246.5,571.3h1.15v1.15h-1.15zM189.4,584.6h1.15v1.15h-1.15zM169.6,588.3h1.15v1.15h-1.15zM163.1,582.5h1.15v1.15h-1.15zM244.0,576.7h1.15v1.15h-1.15zM163.2,573.3h1.15v1.15h-1.15zM204.0,582.5h1.15v1.15h-1.15zM155.6,578.7h1.15v1.15h-1.15zM197.6,580.8h1.15v1.15h-1.15zM244.8,584.0h1.15v1.15h-1.15zM154.6,581.9h1.15v1.15h-1.15zM230.2,586.9h1.15v1.15h-1.15zM196.0,585.5h1.15v1.15h-1.15zM237.6,573.9h1.15v1.15h-1.15zM217.4,579.6h1.15v1.15h-1.15zM165.5,574.5h1.15v1.15h-1.15zM238.7,581.1h1.15v1.15h-1.15zM193.5,584.5h1.15v1.15h-1.15zM142.7,576.3h1.15v1.15h-1.15zM140.4,571.3h1.15v1.15h-1.15zM194.1,588.1h1.15v1.15h-1.15zM189.6,583.5h1.15v1.15h-1.15zM173.2,589.0h1.15v1.15h-1.15zM155.5,575.0h1.15v1.15h-1.15zM177.8,586.9h1.15v1.15h-1.15zM174.8,592.0h1.15v1.15h-1.15zM232.4,591.6h1.15v1.15h-1.15zM140.2,580.5h1.15v1.15h-1.15zM222.6,582.9h1.15v1.15h-1.15zM232.3,580.8h1.15v1.15h-1.15zM153.2,586.6h1.15v1.15h-1.15zM241.9,586.8h1.15v1.15h-1.15zM218.4,582.0h1.15v1.15h-1.15zM239.2,574.8h1.15v1.15h-1.15zM171.9,585.3h1.15v1.15h-1.15zM180.9,579.3h1.15v1.15h-1.15zM183.2,584.7h1.15v1.15h-1.15zM249.9,582.9h1.15v1.15h-1.15zM204.8,589.7h1.15v1.15h-1.15zM179.7,587.3h1.15v1.15h-1.15zM187.1,579.3h1.15v1.15h-1.15zM170.3,583.3h1.15v1.15h-1.15zM145.3,590.4h1.15v1.15h-1.15zM151.2,578.9h1.15v1.15h-1.15zM231.8,583.8h1.15v1.15h-1.15zM171.4,587.6h1.15v1.15h-1.15zM242.9,587.9h1.15v1.15h-1.15zM167.4,584.2h1.15v1.15h-1.15zM169.2,575.0h1.15v1.15h-1.15zM196.2,575.3h1.15v1.15h-1.15zM160.9,582.8h1.15v1.15h-1.15zM181.1,583.5h1.15v1.15h-1.15zM245.2,579.0h1.15v1.15h-1.15zM237.3,575.7h1.15v1.15h-1.15zM229.3,574.5h1.15v1.15h-1.15zM295.4,583.9h1.15v1.15h-1.15zM315.8,576.5h1.15v1.15h-1.15zM317.7,579.9h1.15v1.15h-1.15zM289.5,587.7h1.15v1.15h-1.15zM301.8,588.3h1.15v1.15h-1.15zM253.6,588.3h1.15v1.15h-1.15zM302.7,575.6h1.15v1.15h-1.15zM282.5,589.3h1.15v1.15h-1.15zM304.2,581.1h1.15v1.15h-1.15zM296.4,586.4h1.15v1.15h-1.15zM270.6,581.5h1.15v1.15h-1.15zM253.5,586.9h1.15v1.15h-1.15zM316.7,581.7h1.15v1.15h-1.15zM259.2,581.9h1.15v1.15h-1.15zM284.0,580.9h1.15v1.15h-1.15zM274.7,577.6h1.15v1.15h-1.15zM271.4,581.7h1.15v1.15h-1.15zM303.2,585.8h1.15v1.15h-1.15zM320.3,576.4h1.15v1.15h-1.15zM268.7,582.3h1.15v1.15h-1.15zM297.2,576.8h1.15v1.15h-1.15zM271.7,576.0h1.15v1.15h-1.15zM290.1,574.1h1.15v1.15h-1.15zM278.4,590.3h1.15v1.15h-1.15zM262.0,582.6h1.15v1.15h-1.15zM261.6,580.2h1.15v1.15h-1.15zM265.0,586.7h1.15v1.15h-1.15zM315.2,572.0h1.15v1.15h-1.15zM285.8,582.2h1.15v1.15h-1.15zM265.8,578.9h1.15v1.15h-1.15zM315.3,585.1h1.15v1.15h-1.15zM321.7,575.4h1.15v1.15h-1.15zM282.4,582.4h1.15v1.15h-1.15zM260.1,581.7h1.15v1.15h-1.15zM263.9,588.6h1.15v1.15h-1.15zM256.5,579.4h1.15v1.15h-1.15zM274.6,581.6h1.15v1.15h-1.15zM256.6,583.9h1.15v1.15h-1.15zM267.2,583.9h1.15v1.15h-1.15zM268.6,584.5h1.15v1.15h-1.15zM291.0,582.4h1.15v1.15h-1.15zM313.9,577.1h1.15v1.15h-1.15zM304.0,587.8h1.15v1.15h-1.15zM279.7,590.5h1.15v1.15h-1.15zM279.8,582.4h1.15v1.15h-1.15zM287.7,578.7h1.15v1.15h-1.15zM277.1,586.9h1.15v1.15h-1.15zM274.4,577.3h1.15v1.15h-1.15zM254.5,583.1h1.15v1.15h-1.15zM270.0,574.3h1.15v1.15h-1.15zM319.7,588.5h1.15v1.15h-1.15zM259.1,576.2h1.15v1.15h-1.15zM286.2,583.4h1.15v1.15h-1.15zM295.3,578.8h1.15v1.15h-1.15zM312.1,579.4h1.15v1.15h-1.15zM265.5,575.8h1.15v1.15h-1.15zM269.5,581.3h1.15v1.15h-1.15zM267.9,576.2h1.15v1.15h-1.15zM278.8,586.3h1.15v1.15h-1.15zM282.1,577.3h1.15v1.15h-1.15zM318.7,581.3h1.15v1.15h-1.15zM311.1,585.2h1.15v1.15h-1.15zM312.8,585.3h1.15v1.15h-1.15zM251.6,586.1h1.15v1.15h-1.15zM252.3,586.8h1.15v1.15h-1.15zM301.1,583.6h1.15v1.15h-1.15zM314.5,585.2h1.15v1.15h-1.15zM284.1,586.2h1.15v1.15h-1.15zM292.3,575.4h1.15v1.15h-1.15zM250.0,581.7h1.15v1.15h-1.15zM278.2,582.0h1.15v1.15h-1.15zM316.7,581.2h1.15v1.15h-1.15zM309.4,584.6h1.15v1.15h-1.15zM311.6,576.9h1.15v1.15h-1.15zM320.0,574.8h1.15v1.15h-1.15zM267.9,578.8h1.15v1.15h-1.15zM257.9,584.2h1.15v1.15h-1.15zM261.1,577.5h1.15v1.15h-1.15zM287.6,574.0h1.15v1.15h-1.15zM299.1,587.8h1.15v1.15h-1.15zM317.8,577.0h1.15v1.15h-1.15zM302.0,576.2h1.15v1.15h-1.15zM296.6,588.3h1.15v1.15h-1.15zM305.1,582.8h1.15v1.15h-1.15zM282.9,576.8h1.15v1.15h-1.15zM289.7,578.5h1.15v1.15h-1.15zM252.8,587.5h1.15v1.15h-1.15zM306.3,580.9h1.15v1.15h-1.15zM266.7,573.2h1.15v1.15h-1.15zM316.2,582.6h1.15v1.15h-1.15zM296.5,580.2h1.15v1.15h-1.15zM271.9,574.7h1.15v1.15h-1.15zM259.2,576.3h1.15v1.15h-1.15zM268.1,590.0h1.15v1.15h-1.15zM295.8,577.8h1.15v1.15h-1.15zM300.3,585.8h1.15v1.15h-1.15zM258.1,573.1h1.15v1.15h-1.15zM255.1,580.2h1.15v1.15h-1.15zM287.8,582.9h1.15v1.15h-1.15zM292.0,586.8h1.15v1.15h-1.15zM277.9,576.0h1.15v1.15h-1.15zM266.1,584.6h1.15v1.15h-1.15zM293.3,583.5h1.15v1.15h-1.15zM250.8,577.9h1.15v1.15h-1.15zM271.7,584.0h1.15v1.15h-1.15zM283.2,577.1h1.15v1.15h-1.15zM319.0,577.6h1.15v1.15h-1.15zM296.4,581.5h1.15v1.15h-1.15zM313.6,584.4h1.15v1.15h-1.15zM284.2,581.1h1.15v1.15h-1.15zM266.9,582.8h1.15v1.15h-1.15zM267.8,577.3h1.15v1.15h-1.15zM319.2,579.9h1.15v1.15h-1.15zM300.7,585.4h1.15v1.15h-1.15zM272.1,575.5h1.15v1.15h-1.15zM251.6,577.9h1.15v1.15h-1.15zM285.9,581.9h1.15v1.15h-1.15zM298.6,580.2h1.15v1.15h-1.15zM280.2,579.8h1.15v1.15h-1.15zM268.5,571.3h1.15v1.15h-1.15zM298.0,580.1h1.15v1.15h-1.15zM316.6,581.2h1.15v1.15h-1.15zM266.3,581.4h1.15v1.15h-1.15zM252.5,582.1h1.15v1.15h-1.15zM274.3,585.8h1.15v1.15h-1.15zM280.3,592.1h1.15v1.15h-1.15zM299.1,575.9h1.15v1.15h-1.15zM264.3,577.0h1.15v1.15h-1.15zM307.4,584.3h1.15v1.15h-1.15zM303.2,583.6h1.15v1.15h-1.15zM286.4,576.4h1.15v1.15h-1.15zM264.8,576.9h1.15v1.15h-1.15zM319.8,579.4h1.15v1.15h-1.15zM272.4,575.2h1.15v1.15h-1.15zM309.0,580.1h1.15v1.15h-1.15zM266.6,578.5h1.15v1.15h-1.15zM265.9,578.8h1.15v1.15h-1.15zM304.8,576.8h1.15v1.15h-1.15zM271.2,581.8h1.15v1.15h-1.15zM318.5,579.3h1.15v1.15h-1.15zM285.7,582.2h1.15v1.15h-1.15zM263.5,582.8h1.15v1.15h-1.15zM266.1,583.3h1.15v1.15h-1.15zM280.0,584.4h1.15v1.15h-1.15zM297.9,575.3h1.15v1.15h-1.15zM318.3,588.4h1.15v1.15h-1.15zM260.5,583.1h1.15v1.15h-1.15zM278.3,575.3h1.15v1.15h-1.15zM265.3,581.4h1.15v1.15h-1.15zM320.1,585.8h1.15v1.15h-1.15zM260.2,577.7h1.15v1.15h-1.15zM253.7,583.7h1.15v1.15h-1.15zM254.3,575.1h1.15v1.15h-1.15zM278.3,584.6h1.15v1.15h-1.15zM314.7,583.1h1.15v1.15h-1.15zM313.6,580.9h1.15v1.15h-1.15zM302.8,580.3h1.15v1.15h-1.15zM321.8,581.0h1.15v1.15h-1.15zM362.1,588.3h1.15v1.15h-1.15zM336.2,587.8h1.15v1.15h-1.15zM330.0,571.6h1.15v1.15h-1.15zM362.2,576.5h1.15v1.15h-1.15zM354.1,580.8h1.15v1.15h-1.15zM323.4,581.9h1.15v1.15h-1.15zM350.6,576.5h1.15v1.15h-1.15zM338.3,586.0h1.15v1.15h-1.15zM338.1,581.2h1.15v1.15h-1.15zM336.3,576.2h1.15v1.15h-1.15zM329.3,579.6h1.15v1.15h-1.15zM322.1,582.8h1.15v1.15h-1.15zM334.0,579.5h1.15v1.15h-1.15zM337.1,578.9h1.15v1.15h-1.15zM363.1,582.1h1.15v1.15h-1.15zM327.3,582.3h1.15v1.15h-1.15zM363.5,589.2h1.15v1.15h-1.15zM330.9,581.8h1.15v1.15h-1.15zM337.3,591.0h1.15v1.15h-1.15zM357.3,590.6h1.15v1.15h-1.15zM357.3,590.2h1.15v1.15h-1.15zM340.6,586.9h1.15v1.15h-1.15zM324.1,582.3h1.15v1.15h-1.15zM342.4,582.3h1.15v1.15h-1.15zM338.0,580.9h1.15v1.15h-1.15zM361.5,577.9h1.15v1.15h-1.15zM330.3,581.3h1.15v1.15h-1.15zM337.7,578.4h1.15v1.15h-1.15zM360.6,589.8h1.15v1.15h-1.15zM323.3,584.3h1.15v1.15h-1.15zM339.7,579.4h1.15v1.15h-1.15zM356.9,572.0h1.15v1.15h-1.15zM355.0,581.3h1.15v1.15h-1.15zM323.7,579.5h1.15v1.15h-1.15zM323.5,576.2h1.15v1.15h-1.15zM324.7,575.9h1.15v1.15h-1.15zM361.6,577.2h1.15v1.15h-1.15zM333.1,584.4h1.15v1.15h-1.15zM354.1,589.3h1.15v1.15h-1.15zM360.6,579.8h1.15v1.15h-1.15zM336.6,582.5h1.15v1.15h-1.15zM377.8,581.7h1.15v1.15h-1.15zM410.0,576.2h1.15v1.15h-1.15zM394.0,574.1h1.15v1.15h-1.15zM377.3,585.4h1.15v1.15h-1.15zM398.7,583.7h1.15v1.15h-1.15zM379.9,581.2h1.15v1.15h-1.15zM378.0,578.6h1.15v1.15h-1.15zM365.2,585.3h1.15v1.15h-1.15zM400.5,577.2h1.15v1.15h-1.15zM408.1,586.1h1.15v1.15h-1.15zM394.8,583.4h1.15v1.15h-1.15zM409.3,576.8h1.15v1.15h-1.15zM366.1,579.2h1.15v1.15h-1.15zM376.0,580.4h1.15v1.15h-1.15zM387.3,579.1h1.15v1.15h-1.15zM410.0,583.0h1.15v1.15h-1.15zM409.8,577.1h1.15v1.15h-1.15zM383.2,577.3h1.15v1.15h-1.15zM376.8,576.0h1.15v1.15h-1.15zM385.2,577.3h1.15v1.15h-1.15zM388.2,584.0h1.15v1.15h-1.15zM408.6,584.3h1.15v1.15h-1.15zM373.6,586.7h1.15v1.15h-1.15zM402.7,577.8h1.15v1.15h-1.15zM399.7,579.9h1.15v1.15h-1.15zM403.7,585.3h1.15v1.15h-1.15zM401.3,586.6h1.15v1.15h-1.15zM393.5,583.7h1.15v1.15h-1.15zM380.4,577.6h1.15v1.15h-1.15zM424.8,587.6h1.15v1.15h-1.15zM426.5,573.1h1.15v1.15h-1.15zM443.3,578.1h1.15v1.15h-1.15zM415.2,579.1h1.15v1.15h-1.15zM419.9,572.2h1.15v1.15h-1.15zM442.1,586.1h1.15v1.15h-1.15zM421.9,576.2h1.15v1.15h-1.15zM414.6,586.9h1.15v1.15h-1.15zM413.4,573.1h1.15v1.15h-1.15zM434.1,575.2h1.15v1.15h-1.15zM425.0,583.0h1.15v1.15h-1.15zM451.2,577.8h1.15v1.15h-1.15zM447.3,585.5h1.15v1.15h-1.15zM451.5,581.6h1.15v1.15h-1.15zM422.6,575.7h1.15v1.15h-1.15zM415.4,584.7h1.15v1.15h-1.15zM415.9,585.8h1.15v1.15h-1.15zM431.9,572.0h1.15v1.15h-1.15zM476.1,590.7h1.15v1.15h-1.15zM467.2,584.1h1.15v1.15h-1.15zM460.0,585.4h1.15v1.15h-1.15zM466.2,572.3h1.15v1.15h-1.15zM473.1,578.0h1.15v1.15h-1.15zM474.9,579.9h1.15v1.15h-1.15zM477.4,587.0h1.15v1.15h-1.15zM480.8,574.3h1.15v1.15h-1.15zM474.6,577.2h1.15v1.15h-1.15zM456.1,571.5h1.15v1.15h-1.15zM79.3,550.9h1.15v1.15h-1.15zM54.9,566.9h1.15v1.15h-1.15zM98.5,526.9h1.15v1.15h-1.15zM121.2,544.9h1.15v1.15h-1.15zM65.6,565.0h1.15v1.15h-1.15zM116.8,563.0h1.15v1.15h-1.15zM133.7,561.4h1.15v1.15h-1.15zM68.8,557.0h1.15v1.15h-1.15zM103.4,524.7h1.15v1.15h-1.15zM110.0,560.4h1.15v1.15h-1.15zM90.3,558.0h1.15v1.15h-1.15zM66.2,555.3h1.15v1.15h-1.15zM70.7,540.3h1.15v1.15h-1.15zM116.9,545.0h1.15v1.15h-1.15zM120.6,551.9h1.15v1.15h-1.15zM89.8,544.4h1.15v1.15h-1.15zM55.2,558.0h1.15v1.15h-1.15zM122.0,559.2h1.15v1.15h-1.15zM118.8,538.1h1.15v1.15h-1.15zM68.7,543.8h1.15v1.15h-1.15zM100.9,563.9h1.15v1.15h-1.15zM130.4,541.3h1.15v1.15h-1.15zM129.3,540.0h1.15v1.15h-1.15zM95.5,563.1h1.15v1.15h-1.15zM91.3,551.0h1.15v1.15h-1.15zM101.8,562.5h1.15v1.15h-1.15zM64.6,556.5h1.15v1.15h-1.15zM64.9,543.9h1.15v1.15h-1.15zM63.8,559.1h1.15v1.15h-1.15zM112.2,541.5h1.15v1.15h-1.15zM80.7,545.3h1.15v1.15h-1.15zM202.1,541.8h1.15v1.15h-1.15zM184.3,563.0h1.15v1.15h-1.15zM196.9,542.2h1.15v1.15h-1.15zM156.4,546.9h1.15v1.15h-1.15zM144.9,540.5h1.15v1.15h-1.15zM249.7,524.7h1.15v1.15h-1.15zM181.1,557.7h1.15v1.15h-1.15zM151.7,551.8h1.15v1.15h-1.15zM209.6,545.0h1.15v1.15h-1.15zM226.6,548.3h1.15v1.15h-1.15zM157.2,537.0h1.15v1.15h-1.15zM205.7,540.0h1.15v1.15h-1.15zM177.9,564.8h1.15v1.15h-1.15zM197.1,559.5h1.15v1.15h-1.15zM142.3,567.3h1.15v1.15h-1.15zM143.7,562.0h1.15v1.15h-1.15zM248.9,541.3h1.15v1.15h-1.15zM235.3,562.8h1.15v1.15h-1.15zM193.5,542.8h1.15v1.15h-1.15zM202.4,565.3h1.15v1.15h-1.15zM168.8,554.7h1.15v1.15h-1.15zM225.7,542.6h1.15v1.15h-1.15zM186.9,559.1h1.15v1.15h-1.15zM244.1,539.5h1.15v1.15h-1.15zM224.4,555.9h1.15v1.15h-1.15zM230.1,545.5h1.15v1.15h-1.15zM246.0,556.0h1.15v1.15h-1.15zM167.9,562.2h1.15v1.15h-1.15zM144.2,543.3h1.15v1.15h-1.15zM162.1,559.7h1.15v1.15h-1.15zM263.0,559.4h1.15v1.15h-1.15zM256.0,562.1h1.15v1.15h-1.15zM253.7,563.1h1.15v1.15h-1.15zM290.1,552.3h1.15v1.15h-1.15zM312.7,565.2h1.15v1.15h-1.15zM283.0,564.0h1.15v1.15h-1.15zM318.2,542.8h1.15v1.15h-1.15zM315.5,548.4h1.15v1.15h-1.15zM254.6,548.5h1.15v1.15h-1.15zM293.1,537.1h1.15v1.15h-1.15zM278.6,550.8h1.15v1.15h-1.15zM258.6,540.7h1.15v1.15h-1.15zM319.1,562.3h1.15v1.15h-1.15zM268.5,547.0h1.15v1.15h-1.15zM350.2,548.8h1.15v1.15h-1.15zM354.0,538.9h1.15v1.15h-1.15zM369.8,566.6h1.15v1.15h-1.15zM355.5,552.9h1.15v1.15h-1.15zM136.0,492.0h1.15v1.15h-1.15zM187.0,497.0h1.15v1.15h-1.15zM338.0,414.0h1.15v1.15h-1.15zM86.0,520.0h1.15v1.15h-1.15zM55.0,526.0h1.15v1.15h-1.15zM167.0,522.0h1.15v1.15h-1.15zM230.0,523.0h1.15v1.15h-1.15zM236.0,521.0h1.15v1.15h-1.15zM238.0,524.0h1.15v1.15h-1.15zM371.0,531.0h1.15v1.15h-1.15zM375.0,528.0h1.15v1.15h-1.15zM392.0,530.0h1.15v1.15h-1.15zM409.0,528.0h1.15v1.15h-1.15zM412.0,531.0h1.15v1.15h-1.15zM312.0,529.0h1.15v1.15h-1.15zM312.0,532.0h1.15v1.15h-1.15zM72.0,540.0h1.15v1.15h-1.15zM365.0,556.0h1.15v1.15h-1.15zM352.0,553.0h1.15v1.15h-1.15zM352.0,562.0h1.15v1.15h-1.15zM340.0,566.0h1.15v1.15h-1.15zM420.0,579.0h1.15v1.15h-1.15zM430.0,566.0h1.15v1.15h-1.15zM395.0,568.0h1.15v1.15h-1.15z" fill="#d2d200"/><polyline points="47.3,198.6 51.4,254.2 58.4,200.2 60.3,230.5 64.4,256.6 68.5,237.0 69.3,240.3 76.7,205.1 78.7,259.9 83.2,224.8 84.9,232.9 88.1,192.1 90.6,192.1 93.0,207.6 96.3,217.4 100.4,255.0 101.2,260.7 103.7,211.7 106.1,216.6 108.2,267.3 112.7,232.9 115.1,246.0 117.6,237.0 122.5,263.2 127.4,254.2 129.0,268.9 130.6,240.3 133.1,233.8 137.2,196.2 141.8,213.3 144.5,201.0 147.3,241.9 150.3,204.3 151.9,197.0 154.8,197.0 156.8,219.0 158.9,245.2 160.9,218.2 162.9,241.9 165.7,230.5 170.6,240.3 174.4,259.1 177.2,214.1 178.8,189.6 180.9,215.8 184.0,243.6 186.2,205.1 188.6,190.4 190.2,199.4 193.5,207.6 196.8,222.3 199.7,216.6 202.2,243.6 204.1,251.7 208.4,215.8 211.2,237.0 214.8,221.5 218.0,255.8 221.3,243.6 224.6,246.0 227.0,210.0 229.5,197.0 231.9,219.0 234.4,228.0 236.5,253.4 238.5,223.1 240.6,235.4 242.6,223.9 245.0,201.0 249.1,191.2 252.4,188.8 255.6,191.2 258.1,207.6 261.4,238.7 263.8,209.2 267.1,192.1 268.7,189.6 272.8,191.2 275.3,197.0 279.9,190.4 282.4,207.6 284.3,236.2 286.4,206.0 288.9,191.2 292.2,194.5 296.3,190.4 299.5,191.2 302.8,199.4 304.4,191.2 307.7,190.4 311.8,202.7 315.1,192.9 318.3,205.1 322.4,192.9 324.9,210.0 327.6,231.3 330.6,213.3 333.0,196.2 336.3,191.2 339.1,195.3 341.2,190.4 344.5,209.2 347.7,205.1 351.8,200.2 355.1,211.7 360.0,221.5 361.6,220.7 364.1,240.3 366.5,204.3 369.0,194.5 373.1,193.7 375.5,195.3 378.0,191.2 380.4,192.1 382.9,191.2 385.3,198.6 387.8,206.8 391.9,192.1 394.9,204.3 398.2,212.5 400.6,192.1 405.5,202.7 407.2,230.5 409.9,266.5 412.1,230.5 414.5,224.8 417.0,229.7 418.6,200.2 423.5,192.1 428.4,218.2 432.5,189.6 435.3,177.4 437.4,197.8 441.5,241.9 443.9,225.6 446.7,266.5 448.9,220.7 451.3,206.0 453.8,209.2 455.4,222.3 457.8,267.3 460.3,228.0 462.3,251.7 464.9,228.0 469.3,267.3 473.4,240.3 476.6,228.0 480.7,255.8 485.3,224.8 488.1,235.4 489.4,253.4 492.2,226.4 496.8,249.3 499.2,245.2 501.7,246.0" fill="none" stroke="#17a8dd" stroke-width="1.1" stroke-linejoin="round"/></svg>
<span class="t" style="left:26.04px;top:146px;font-size:9.8px;letter-spacing:-0.45px;">350</span>
<span class="t" style="left:26.04px;top:215px;font-size:9.8px;letter-spacing:-0.45px;">300</span>
<span class="t" style="left:26.04px;top:285px;font-size:9.8px;letter-spacing:-0.45px;">250</span>
<span class="t" style="left:26.04px;top:355px;font-size:9.8px;letter-spacing:-0.45px;">200</span>
<span class="t" style="left:26.04px;top:424px;font-size:9.8px;letter-spacing:-0.45px;">150</span>
<span class="t" style="left:26.04px;top:494px;font-size:9.8px;letter-spacing:-0.45px;">100</span>
<span class="t" style="left:31.49px;top:563px;font-size:9.8px;letter-spacing:-0.45px;">50</span>
<span class="t" style="left:506.00px;top:146px;font-size:9.8px;letter-spacing:-0.45px;">0.35</span>
<span class="t" style="left:506.00px;top:215px;font-size:9.8px;letter-spacing:-0.45px;">0.30</span>
<span class="t" style="left:506.00px;top:285px;font-size:9.8px;letter-spacing:-0.45px;">0.25</span>
<span class="t" style="left:506.00px;top:355px;font-size:9.8px;letter-spacing:-0.45px;">0.20</span>
<span class="t" style="left:506.00px;top:424px;font-size:9.8px;letter-spacing:-0.45px;">0.15</span>
<span class="t" style="left:506.00px;top:494px;font-size:9.8px;letter-spacing:-0.45px;">0.10</span>
<span class="t" style="left:506.00px;top:563px;font-size:9.8px;letter-spacing:-0.45px;">0.05</span>
<span class="t" style="left:44.27px;top:643px;font-size:9.8px;letter-spacing:-0.45px;">0</span>
<span class="t" style="left:86.95px;top:643px;font-size:9.8px;letter-spacing:-0.45px;">12</span>
<span class="t" style="left:132.35px;top:643px;font-size:9.8px;letter-spacing:-0.45px;">24</span>
<span class="t" style="left:177.75px;top:643px;font-size:9.8px;letter-spacing:-0.45px;">36</span>
<span class="t" style="left:223.15px;top:643px;font-size:9.8px;letter-spacing:-0.45px;">48</span>
<span class="t" style="left:268.55px;top:643px;font-size:9.8px;letter-spacing:-0.45px;">60</span>
<span class="t" style="left:313.95px;top:643px;font-size:9.8px;letter-spacing:-0.45px;">72</span>
<span class="t" style="left:359.35px;top:643px;font-size:9.8px;letter-spacing:-0.45px;">84</span>
<span class="t" style="left:404.75px;top:643px;font-size:9.8px;letter-spacing:-0.45px;">96</span>
<span class="t" style="left:447.42px;top:643px;font-size:9.8px;letter-spacing:-0.45px;">108</span>
<span class="t" style="left:488.30px;top:643px;font-size:9.8px;transform:scaleX(0.8961);transform-origin:0 0;">120gB</span>
<span class="t" style="left:47.00px;top:140px;font-size:9.8px;transform:scaleX(0.9092);transform-origin:0 0;">MB/s</span>
<span class="t" style="left:489.40px;top:140px;font-size:9.8px;transform:scaleX(0.8880);transform-origin:0 0;">ms</span>
<div style="left:539px;top:133px;width:63.5px;height:18px;border:1px solid #3399ff;box-shadow:inset 0 0 0 1px #bfe0ff;box-sizing:border-box;background:linear-gradient(#f2f2f2,#e4e4e4);"></div>
<span class="t" style="left:560.60px;top:138px;font-size:11px;transform:scaleX(0.7833);transform-origin:0 0;">Start</span>
<div style="left:531px;top:160.1px;width:88px;height:1px;background:#a8a8a8;"></div>
<div style="left:531px;top:194.0px;width:88px;height:1px;background:#a8a8a8;"></div>
<div style="left:531px;top:256.9px;width:88px;height:1px;background:#a8a8a8;"></div>
<div style="left:531px;top:347.2px;width:88px;height:1px;background:#a8a8a8;"></div>
<svg class="ic" style="left:535.4px;top:165.8px" width="10.8" height="10.8" viewBox="0 0 12 12"><circle cx="6" cy="6" r="5.2" fill="#fff" stroke="#6a6a6a" stroke-width="1.0"/><circle cx="6" cy="6" r="2.7" fill="#1a1a1a"/></svg>
<svg class="ic" style="left:535.4px;top:179.6px" width="10.8" height="10.8" viewBox="0 0 12 12"><circle cx="6" cy="6" r="5.2" fill="#fff" stroke="#6a6a6a" stroke-width="1.0"/></svg>
<svg class="ic" style="left:535.4px;top:201.4px" width="10.8" height="10.8" viewBox="0 0 12 12"><rect x="0.6" y="0.6" width="10.8" height="10.8" fill="#fff" stroke="#7c7c7c" stroke-width="1.1"/></svg>
<svg class="ic" style="left:535.4px;top:243.9px" width="10.8" height="10.8" viewBox="0 0 12 12"><rect x="0.6" y="0.6" width="10.8" height="10.8" fill="#fff" stroke="#7c7c7c" stroke-width="1.1"/><path d="M2.6,6 L5,8.6 L9.6,2.8" fill="none" stroke="#111" stroke-width="2.0"/></svg>
<svg class="ic" style="left:535.4px;top:352.9px" width="10.8" height="10.8" viewBox="0 0 12 12"><rect x="0.6" y="0.6" width="10.8" height="10.8" fill="#fff" stroke="#7c7c7c" stroke-width="1.1"/><path d="M2.6,6 L5,8.6 L9.6,2.8" fill="none" stroke="#111" stroke-width="2.0"/></svg>
<svg class="ic" style="left:535.4px;top:382.3px" width="10.8" height="10.8" viewBox="0 0 12 12"><rect x="0.6" y="0.6" width="10.8" height="10.8" fill="#fff" stroke="#7c7c7c" stroke-width="1.1"/><path d="M2.6,6 L5,8.6 L9.6,2.8" fill="none" stroke="#111" stroke-width="2.0"/></svg>
<span class="t" style="left:549.40px;top:167px;font-size:11px;transform:scaleX(0.8214);transform-origin:0 0;">Read</span>
<span class="t" style="left:549.40px;top:181px;font-size:11px;transform:scaleX(0.8245);transform-origin:0 0;">Write</span>
<span class="t" style="left:549.40px;top:203px;font-size:11px;transform:scaleX(0.8194);transform-origin:0 0;">Short stroke</span>
<span class="t" style="left:599.00px;top:223px;font-size:11px;transform:scaleX(0.8167);transform-origin:0 0;">gB</span>
<span class="t" style="left:549.40px;top:245px;font-size:11px;transform:scaleX(0.8248);transform-origin:0 0;">Transfer rate</span>
<span class="t" style="left:535.50px;top:261px;font-size:11px;transform:scaleX(0.7843);transform-origin:0 0;">Minimum</span>
<span class="t" style="left:535.50px;top:290px;font-size:11px;transform:scaleX(0.7824);transform-origin:0 0;">Maximum</span>
<span class="t" style="left:535.50px;top:317px;font-size:11px;transform:scaleX(0.8337);transform-origin:0 0;">Average</span>
<span class="t" style="left:549.40px;top:354px;font-size:11px;transform:scaleX(0.8196);transform-origin:0 0;">Access time</span>
<span class="t" style="left:549.40px;top:384px;font-size:11px;transform:scaleX(0.7969);transform-origin:0 0;">Burst rate</span>
<span class="t" style="left:535.20px;top:412px;font-size:11px;transform:scaleX(0.8282);transform-origin:0 0;">CPU usage</span>
<div style="left:535.2px;top:218.4px;width:53.39999999999998px;height:17.19999999999999px;background:#fff;border:1px solid #d2d2d2;box-sizing:border-box;"></div>
<div style="left:574.0px;top:219.4px;width:13.6px;height:15.199999999999989px;background:linear-gradient(#e9e9e9 0%,#e2e2e2 46%,#f4f4f4 50%,#e9e9e9 54%,#e0e0e0 100%);border-left:1px solid #dcdcdc;box-sizing:border-box;"></div>
<svg class="ic" style="left:576.6px;top:220.0px" width="8" height="14" viewBox="0 0 8 14"><path d="M1.6,5 L4,2.4 L6.4,5Z M1.6,9 L4,11.6 L6.4,9Z" fill="#444"/></svg>
<span class="t" style="left:538.70px;top:223px;font-size:11px;color:#9a9a9a;transform:scaleX(0.8571);transform-origin:0 0;">40</span>
<div style="left:535.5px;top:273.2px;width:80.10000000000002px;height:11.900000000000034px;background:#000;"></div>
<span class="t" style="left:547.00px;top:276px;font-size:10.2px;font-weight:bold;color:#18b4ff;transform:scaleX(1.0860);transform-origin:0 0;">264.2 MB/s</span>
<div style="left:535.5px;top:301.2px;width:80.10000000000002px;height:11.800000000000011px;background:#000;"></div>
<span class="t" style="left:547.00px;top:304px;font-size:10.2px;font-weight:bold;color:#18b4ff;transform:scaleX(1.0860);transform-origin:0 0;">329.7 MB/s</span>
<div style="left:535.5px;top:328.1px;width:80.10000000000002px;height:12.099999999999966px;background:#000;"></div>
<span class="t" style="left:547.00px;top:331px;font-size:10.2px;font-weight:bold;color:#18b4ff;transform:scaleX(1.0860);transform-origin:0 0;">300.1 MB/s</span>
<div style="left:535.5px;top:366.6px;width:80.10000000000002px;height:12.099999999999966px;background:#000;"></div>
<span class="t" style="left:554.00px;top:369px;font-size:10.2px;font-weight:bold;color:#f0f000;transform:scaleX(1.0218);transform-origin:0 0;">0.042 ms</span>
<div style="left:535.5px;top:396px;width:80.10000000000002px;height:12px;background:#000;"></div>
<span class="t" style="left:547.80px;top:399px;font-size:10.2px;font-weight:bold;color:#fff;transform:scaleX(1.0670);transform-origin:0 0;">141.1 MB/s</span>
<div style="left:535.5px;top:425px;width:80.10000000000002px;height:12px;background:#000;"></div>
<span class="t" style="left:562.00px;top:428px;font-size:10.2px;font-weight:bold;color:#fff;">12.1%</span>
<div class="win10"></div>
<div class="w10title"></div>
<div class="w10menu"></div>
<div class="w10tool"></div>
<div class="w10toolline"></div>
<svg class="ic" style="left:647.8px;top:7.6px" width="13" height="11.8" viewBox="0 0 13 12" preserveAspectRatio="none">
<polygon points="0.6,6.6 6.9,0.6 12.4,4.3 5.8,11.4" fill="#14110e" stroke="#14110e" stroke-width="0.9" stroke-linejoin="round"/>
<ellipse cx="7.5" cy="4.5" rx="3.5" ry="2.6" transform="rotate(-36 7.5 4.5)" fill="url(#plat)"/>
<ellipse cx="7.6" cy="4.3" rx="0.9" ry="0.7" transform="rotate(-36 7.6 4.3)" fill="#8c9cc0"/>
<ellipse cx="5.3" cy="8.3" rx="1.3" ry="0.6" transform="rotate(-36 5.3 8.3)" fill="#c88a58"/>
</svg>
<span class="t" style="left:666.30px;top:10px;font-size:11.4px;transform:scaleX(0.9095);transform-origin:0 0;">HD Tune Pro 5.60 - Hard Disk/SSD Utility</span>
<span class="t" style="left:647.00px;top:31px;font-size:12px;transform:scaleX(0.8013);transform-origin:0 0;">File</span>
<span class="t" style="left:678.80px;top:31px;font-size:12px;transform:scaleX(0.8830);transform-origin:0 0;">Help</span>
<div style="left:647px;top:42.3px;width:5.5px;height:1px;background:#222;"></div>
<div style="left:678.8px;top:42.3px;width:7.5px;height:1px;background:#222;"></div>
<div style="left:1173px;top:13.6px;width:9.2px;height:1.1px;background:#111;"></div>
<div style="left:1213.6px;top:9.4px;width:9.2px;height:8.8px;border:1.1px solid #111;box-sizing:border-box;"></div>
<svg class="ic" style="left:1254px;top:9px" width="10" height="10" viewBox="0 0 10 10"><path d="M0.5,0.5 L9.5,9.5 M9.5,0.5 L0.5,9.5" stroke="#111" stroke-width="1.1"/></svg>
<svg class="ic" style="left:748.7px;top:29.5px" width="13" height="19" viewBox="-0.5 -0.5 13 19"><path d="M0,0 L0,14.7 L3.3,11.8 L5.8,16.9 L8,15.9 L5.7,10.9 L10.4,10.4 Z" fill="#fff" stroke="#0c1420" stroke-width="0.95" stroke-linejoin="round"/></svg>
<div style="left:650px;top:53px;width:323px;height:18.5px;background:#e4e4e4;border:1px solid #b4b4b4;box-sizing:border-box;"></div>
<svg class="ic" style="left:958px;top:58.25px" width="10" height="8" viewBox="0 0 10 8"><path d="M1.6,2 L5,5.6 L8.4,2" fill="none" stroke="#444" stroke-width="1.1"/></svg>
<span class="t" style="left:653.75px;top:58px;font-size:11px;transform:scaleX(0.8487);transform-origin:0 0;">SSD Smartbuy 120GB (120 gB)</span>
<div style="left:983px;top:51.2px;width:24px;height:23.39999999999999px;border:1px solid #c6c6c6;box-sizing:border-box;background:linear-gradient(#ececec,#e0e0e0);"></div>
<svg class="ic" style="left:991.0px;top:54.55px" width="8" height="15.3" viewBox="0 0 8 15.5" preserveAspectRatio="none">
<path d="M1.2,8.6 V12.8" stroke="#5aa4ac" stroke-width="1"/>
<rect x="2.3" y="0.5" width="4.2" height="11" rx="1.7" fill="#f01414"/>
<path d="M2.3,3.4 V2.2 Q2.3,0.5 4.4,0.5 Q6.5,0.5 6.5,2.2 V3.4 Z" fill="#20d8e4"/>
<rect x="1.5" y="9.4" width="6" height="5.5" rx="2" fill="#f01414"/>
<path d="M6.6,1.6 V9.8 Q7.7,10.4 7.6,12.6 Q7.4,14.9 5.2,15" fill="none" stroke="#2a0c0c" stroke-width="0.9"/>
<path d="M3.3,3.6 V9.6" stroke="#ff7a7a" stroke-width="0.8"/>
<rect x="2.8" y="11.2" width="1.6" height="1" fill="#ffb0b0"/>
</svg>
<div style="left:1075px;top:51.2px;width:24px;height:23.39999999999999px;border:2px solid #0a78d8;box-sizing:border-box;background:#e6f0fa;"></div>
<svg class="ic" style="left:1079.75px;top:55.9px" width="14.5" height="14" viewBox="0 0 16 15" preserveAspectRatio="none">
<path d="M1,1 H6.2 L8.6,3.2 V11.6 H1 Z" fill="#fff" stroke="#111" stroke-width="1.3"/>
<path d="M2.6,3.8 H7 M2.6,5.8 H7 M2.6,7.8 H7 M2.6,9.6 H7" stroke="#2090ff" stroke-width="1.2"/>
<path d="M6.8,3.6 H12.2 L14.6,5.8 V14.2 H6.8 Z" fill="#fff" stroke="#111" stroke-width="1.3"/>
<path d="M15.2,6.6 V14.9 H7.6" fill="none" stroke="#222" stroke-width="1.1"/>
<path d="M8.4,6.8 H13 M8.4,8.7 H13 M8.4,10.6 H13 M8.4,12.4 H13" stroke="#2090ff" stroke-width="1.2"/>
</svg>
<div style="left:1102px;top:51.2px;width:23.59999999999991px;height:23.39999999999999px;border:1px solid #c6c6c6;box-sizing:border-box;background:linear-gradient(#ececec,#e0e0e0);"></div>
<svg class="ic" style="left:1106.55px;top:55.9px" width="14.5" height="14" viewBox="0 0 16 15" preserveAspectRatio="none">
<path d="M1,1 H6.2 L8.6,3.2 V11.6 H1 Z" fill="#fff" stroke="#111" stroke-width="1.3"/>
<rect x="2.2" y="3.8" width="5" height="6" fill="#20b040"/>
<rect x="3" y="5" width="2.2" height="2.2" fill="#3060e0"/>
<path d="M6.8,3.6 H12.2 L14.6,5.8 V14.2 H6.8 Z" fill="#fff" stroke="#111" stroke-width="1.3"/>
<path d="M15.2,6.6 V14.9 H7.6" fill="none" stroke="#222" stroke-width="1.1"/>
<rect x="8" y="6.6" width="5.4" height="6.2" fill="#20b040"/>
<rect x="9" y="8.6" width="2.4" height="2.4" fill="#3060e0"/>
</svg>
<div style="left:1128.75px;top:51.2px;width:24.0px;height:23.39999999999999px;border:1px solid #c6c6c6;box-sizing:border-box;background:linear-gradient(#ececec,#e0e0e0);"></div>
<svg class="ic" style="left:1134.25px;top:57.65px" width="13" height="10.5" viewBox="0 0 14 11" preserveAspectRatio="none">
<path d="M4.2,2.6 V1.2 Q4.2,0.6 4.8,0.6 H8.4 Q9,0.6 9,1.2 V2.6" fill="none" stroke="#111" stroke-width="1.1"/>
<rect x="0.6" y="2.6" width="12.8" height="7.8" rx="1.2" fill="#1a1a1a"/>
<circle cx="6.4" cy="6.6" r="2.9" fill="#e8e8e8" stroke="#000" stroke-width="0.6"/>
<circle cx="6.4" cy="6.6" r="1.6" fill="#fff"/>
<rect x="10.6" y="4" width="1.6" height="1.6" fill="#10e040"/>
</svg>
<div style="left:1155.4px;top:51.2px;width:24.0px;height:23.39999999999999px;border:1px solid #c6c6c6;box-sizing:border-box;background:linear-gradient(#ececec,#e0e0e0);"></div>
<svg class="ic" style="left:1160.15px;top:56.4px" width="14.5" height="13" viewBox="0 0 15 14" preserveAspectRatio="none">
<ellipse cx="4.9" cy="5.7" rx="4.4" ry="3" fill="#6e6c00"/>
<ellipse cx="4.9" cy="4.2" rx="4.4" ry="3" fill="#e6e400" stroke="#8a8600" stroke-width="0.5"/>
<path d="M1.9000000000000004,3.6 Q2.5000000000000004,2.0 4.300000000000001,1.8000000000000003" fill="none" stroke="#ffff80" stroke-width="0.8"/>
<rect x="4.3500000000000005" y="1.8000000000000003" width="1.2" height="3.6" fill="#a8a0ec"/>
<ellipse cx="9.9" cy="10.5" rx="4.4" ry="3" fill="#6e6c00"/>
<ellipse cx="9.9" cy="9.0" rx="4.4" ry="3" fill="#e6e400" stroke="#8a8600" stroke-width="0.5"/>
<path d="M6.9,8.4 Q7.5,6.8 9.3,6.6" fill="none" stroke="#ffff80" stroke-width="0.8"/>
<rect x="9.35" y="6.6" width="1.2" height="3.6" fill="#a8a0ec"/>
</svg>
<div style="left:1187px;top:51.2px;width:23.799999999999955px;height:23.39999999999999px;border:1px solid #c6c6c6;box-sizing:border-box;background:linear-gradient(#ececec,#e0e0e0);"></div>
<svg class="ic" style="left:1190.0px;top:53.8px" width="16.8" height="17" viewBox="0 0 17 17" preserveAspectRatio="none">
<rect x="0.4" y="0.4" width="16.2" height="16.2" rx="2" fill="url(#pg)" stroke="#98008a" stroke-width="0.8"/>
<path d="M1.4,1.6 H15.6" stroke="#ff9cf6" stroke-width="0.9" opacity="0.8"/>
<path d="M8.5,2.2 V12.4" stroke="#fff" stroke-width="2.1"/>
<path d="M3.3,8.3 L8.5,13.8 L13.7,8.3" fill="none" stroke="#fff" stroke-width="2.5"/>
</svg>
<div style="left:1222.2px;top:51.2px;width:46.59999999999991px;height:23.39999999999999px;border:1px solid #c6c6c6;box-sizing:border-box;background:linear-gradient(#ececec,#e0e0e0);"></div>
<span class="t" style="left:1238.00px;top:59px;font-size:11px;transform:scaleX(0.7850);transform-origin:0 0;">Exit</span>
<span class="t" style="left:1010.00px;top:59px;font-size:11.5px;font-weight:bold;transform:scaleX(0.9493);transform-origin:0 0;">33°C</span>
<div class="tab10" style="left:652.5px;top:89px;width:137.0px;height:18px;"></div>
<div class="tab10" style="left:789.5px;top:89px;width:125.0px;height:18px;"></div>
<div class="tab10" style="left:914.5px;top:89px;width:94.0px;height:18px;"></div>
<div class="tab10" style="left:1008.5px;top:89px;width:143.0px;height:18px;"></div>
<div class="tab10" style="left:1151.5px;top:89px;width:115.09999999999991px;height:18px;"></div>
<div class="tab10" style="left:768px;top:107px;width:81.5px;height:18px;"></div>
<div class="tab10" style="left:849.5px;top:107px;width:95.0px;height:18px;"></div>
<div class="tab10" style="left:944.5px;top:107px;width:110.79999999999995px;height:18px;"></div>
<div class="tab10" style="left:1055.3px;top:107px;width:122.70000000000005px;height:18px;"></div>
<div class="tab10" style="left:1178px;top:107px;width:88.59999999999991px;height:18px;"></div>
<div class="pane10" style="left:650.3px;top:124px;width:618.7px;height:547px;"></div>
<div class="sel10" style="left:650.3px;top:106px;width:118.10000000000002px;height:19.5px;"></div>
<svg class="ic" style="left:677.5px;top:90.3px" width="13" height="14.5" viewBox="0 0 14 15" preserveAspectRatio="none">
<path d="M1,0.8 H9.3 L13,4.4 V14.2 H1 Z" fill="#f2f2f2" stroke="#181818" stroke-width="1.7"/>
<path d="M9.3,0.8 V4.4 H13" fill="none" stroke="#181818" stroke-width="1"/>
<path d="M6.3,1.9 C8.4,1.9 8.6,4 8.1,5.9 L7.2,9.3 L5.4,9.3 L4.5,5.9 C4,4 4.2,1.9 6.3,1.9 Z" fill="#ff18e0" stroke="#5a0050" stroke-width="0.8"/>
<ellipse cx="6.3" cy="11.8" rx="1.4" ry="1" fill="#ff18e0" stroke="#5a0050" stroke-width="0.8"/>
</svg>
<span class="t" style="left:698.00px;top:94px;font-size:11px;transform:scaleX(0.8440);transform-origin:0 0;">File Benchmark</span>
<svg class="ic" style="left:816px;top:90.4px" width="15" height="14.5" viewBox="0 0 15 15" preserveAspectRatio="none"><rect x="0.6" y="0.6" width="13.4" height="13.4" rx="0.8" fill="#ffffc0"/>
<rect x="1" y="9" width="12.2" height="4.2" fill="#10d010"/>
<rect x="1.4" y="6" width="2.2" height="7.2" fill="#10d010"/>
<rect x="5.6" y="4.4" width="3.4" height="8.8" fill="#10d010"/>
<rect x="10" y="6.6" width="2.6" height="6.6" fill="#10d010"/>
<rect x="3.8" y="8.6" width="1.7" height="4.6" fill="#3838e0"/>
<rect x="6.6" y="5.6" width="1.3" height="7.6" fill="#3838e0"/>
<rect x="9" y="8" width="1.3" height="5.2" fill="#3838e0"/>
<path d="M0.6,13.6 V1.4 Q0.6,0.6 1.4,0.6 H13.4" fill="none" stroke="#6a6a6a" stroke-width="0.9"/><path d="M13.9,0.9 V13.1 Q13.9,13.9 13.1,13.9 H0.9" fill="none" stroke="#141414" stroke-width="1.7"/></svg>
<span class="t" style="left:837.00px;top:94px;font-size:11px;transform:scaleX(0.8409);transform-origin:0 0;">Disk monitor</span>
<svg class="ic" style="left:941px;top:90.6px" width="15.5" height="14" viewBox="0 0 16 15" preserveAspectRatio="none">
<path d="M0.9,5 L3.8,4.8 L8.6,0.9 L8.6,13.9 L3.8,10 L0.9,9.8 Z" fill="#e6de00" stroke="#1c1c00" stroke-width="1.3" stroke-linejoin="round"/>
<path d="M5.4,4.6 L7.6,2.8 V7" fill="none" stroke="#ffff90" stroke-width="0.8"/>
<path d="M10.4,4.2 Q12.6,7.4 10.4,10.6" fill="none" stroke="#2c2c2c" stroke-width="1.3"/>
<path d="M12.4,2.6 Q15.6,7.4 12.4,12.2" fill="none" stroke="#6a6a6a" stroke-width="1.3"/>
</svg>
<span class="t" style="left:961.50px;top:94px;font-size:11px;transform:scaleX(0.8388);transform-origin:0 0;">AAM</span>
<svg class="ic" style="left:1035px;top:90.4px" width="14.5" height="14.5" viewBox="0 0 15 15" preserveAspectRatio="none"><rect x="0.6" y="0.6" width="13.4" height="13.4" rx="0.8" fill="#ffffc8"/>
<g fill="#ff5050"><rect x="2.2" y="8" width="1.4" height="1.4"/><rect x="4.6" y="10.4" width="1.4" height="1.4"/><rect x="6.6" y="7.4" width="1.4" height="1.4"/><rect x="9" y="9.6" width="1.4" height="1.4"/><rect x="10.8" y="6.6" width="1.4" height="1.4"/><rect x="2.6" y="11.2" width="1.4" height="1.2"/><rect x="7.6" y="10.8" width="1.4" height="1.2"/><rect x="10.8" y="10.6" width="1.4" height="1.2"/></g>
<g fill="#7878ff"><rect x="3.6" y="6" width="1.4" height="1.4"/><rect x="5.8" y="4.6" width="1.4" height="1.4"/><rect x="8.2" y="5.4" width="1.4" height="1.4"/><rect x="10" y="3.2" width="1.4" height="1.4"/><rect x="11.4" y="4.6" width="1.2" height="1.2"/></g>
<path d="M0.6,13.6 V1.4 Q0.6,0.6 1.4,0.6 H13.4" fill="none" stroke="#6a6a6a" stroke-width="0.9"/><path d="M13.9,0.9 V13.1 Q13.9,13.9 13.1,13.9 H0.9" fill="none" stroke="#141414" stroke-width="1.7"/></svg>
<span class="t" style="left:1055.60px;top:94px;font-size:11px;transform:scaleX(0.8656);transform-origin:0 0;">Random Access</span>
<svg class="ic" style="left:1177.7px;top:90.4px" width="14.5" height="14.5" viewBox="0 0 15 15" preserveAspectRatio="none"><rect x="0.6" y="0.6" width="13.4" height="13.4" rx="0.8" fill="#ffffc8"/>
<rect x="1" y="6" width="2.2" height="7.2" fill="#10d010"/>
<rect x="3.2" y="8" width="1.8" height="5.2" fill="#3838e0"/>
<rect x="5.4" y="5.4" width="8" height="8" fill="#fff" stroke="#222" stroke-width="0.9"/>
<rect x="5.8" y="5.8" width="7.2" height="1.8" fill="#2030c0"/>
<rect x="6.4" y="8.2" width="6" height="4.6" fill="#ffb0b0"/>
<rect x="7" y="9" width="1.6" height="1.4" fill="#30d0c0"/><rect x="10" y="10.4" width="1.6" height="1.4" fill="#ff6060"/>
<path d="M0.6,13.6 V1.4 Q0.6,0.6 1.4,0.6 H13.4" fill="none" stroke="#6a6a6a" stroke-width="0.9"/><path d="M13.9,0.9 V13.1 Q13.9,13.9 13.1,13.9 H0.9" fill="none" stroke="#141414" stroke-width="1.7"/></svg>
<span class="t" style="left:1198.70px;top:94px;font-size:11px;transform:scaleX(0.8313);transform-origin:0 0;">Extra tests</span>
<svg class="ic" style="left:677.3px;top:106.8px" width="7.3" height="14.5" viewBox="0 0 8 15" preserveAspectRatio="none">
<path d="M3.9,0.7 C6.5,0.7 7.3,2.6 6.8,5 L5.4,9.7 L2.5,9.7 L1,5 C0.5,2.6 1.3,0.7 3.9,0.7 Z" fill="#dede00" stroke="#26260a" stroke-width="1.15"/>
<path d="M2.7,2.2 C2.2,3.4 2.4,5 3.1,6.8" fill="none" stroke="#ffffa0" stroke-width="1"/>
<ellipse cx="4" cy="12.7" rx="2.5" ry="1.5" fill="#d0d000" stroke="#26260a" stroke-width="1.15"/>
</svg>
<span class="t" style="left:694.50px;top:110px;font-size:11px;transform:scaleX(0.8537);transform-origin:0 0;">Benchmark</span>
<svg class="ic" style="left:792px;top:108.6px" width="7.8" height="14.5" viewBox="0 0 8 15" preserveAspectRatio="none">
<circle cx="4" cy="2.5" r="2" fill="#20c8f4" stroke="#001828" stroke-width="0.9"/>
<path d="M1.3,5.7 H5.7 V11.8 H7.3 V14.4 H0.7 V11.8 H2.3 V8 H1.3 Z" fill="#1060f4" stroke="#000818" stroke-width="1" stroke-linejoin="round"/>
<path d="M3,6.5 V13.4" stroke="#58b8ff" stroke-width="0.9"/>
</svg>
<span class="t" style="left:809.70px;top:112px;font-size:11px;transform:scaleX(0.8334);transform-origin:0 0;">Info</span>
<svg class="ic" style="left:872px;top:108.6px" width="15" height="14.5" viewBox="0 0 15 15" preserveAspectRatio="none">
<path d="M5.2,0.8 H9.8 V5.2 H14.2 V9.8 H9.8 V14.2 H5.2 V9.8 H0.8 V5.2 H5.2 Z" fill="#f01818" stroke="#600000" stroke-width="1" stroke-linejoin="round"/>
<path d="M6.2,1.8 V6.2 H1.8" fill="none" stroke="#ff8080" stroke-width="0.9"/>
</svg>
<span class="t" style="left:893.00px;top:112px;font-size:11px;transform:scaleX(0.8366);transform-origin:0 0;">Health</span>
<svg class="ic" style="left:967px;top:108.4px" width="15.5" height="14.8" viewBox="0 0 16 15" preserveAspectRatio="none">
<path d="M7.6,7.2 L14.2,13.4" stroke="#00004a" stroke-width="3.6" stroke-linecap="round"/>
<path d="M7.8,7.4 L14,13.2" stroke="#1030d8" stroke-width="1.9" stroke-linecap="round"/>
<circle cx="5.2" cy="5" r="4.2" fill="#10e040" stroke="#063a10" stroke-width="1.2"/>
<circle cx="4" cy="3.8" r="1.3" fill="#a0ffb0"/>
</svg>
<span class="t" style="left:987.70px;top:112px;font-size:11px;transform:scaleX(0.8254);transform-origin:0 0;">Error Scan</span>
<svg class="ic" style="left:1078.4px;top:108.6px" width="14" height="14.5" viewBox="0 0 14 15" preserveAspectRatio="none">
<path d="M1,2.8 Q1,1 2.8,1 H6.2 L7.8,2.8 H11.8 Q13.2,2.8 13.2,4.2 V12.8 Q13.2,14.2 11.8,14.2 H2.4 Q1,14.2 1,12.8 Z" fill="#a07800" stroke="#241800" stroke-width="1.3"/>
<path d="M2.8,4.8 H11.4 Q12.6,4.8 12.6,6 V12.4 Q12.6,13.6 11.4,13.6 H2.8 Q1.6,13.6 1.6,12.4 V6 Q1.6,4.8 2.8,4.8 Z" fill="url(#fold)" stroke="#241800" stroke-width="0.9"/>
<path d="M2.7,6 V12.4" stroke="#fff0a0" stroke-width="0.9"/>
</svg>
<span class="t" style="left:1099.40px;top:112px;font-size:11px;transform:scaleX(0.8418);transform-origin:0 0;">Folder Usage</span>
<svg class="ic" style="left:1201px;top:108.4px" width="12.6" height="14.8" viewBox="0 0 13 15" preserveAspectRatio="none">
<path d="M1.6,3.4 H11.4 L10.6,14.3 H2.4 Z" fill="url(#bin)" stroke="#000" stroke-width="1.2"/>
<path d="M0.5,1.9 H12.5 V3.6 H0.5 Z" fill="#111" stroke="#000" stroke-width="0.7"/>
<rect x="4.4" y="0.4" width="4.2" height="1.8" fill="#111"/>
</svg>
<span class="t" style="left:1222.00px;top:112px;font-size:11px;transform:scaleX(0.8139);transform-origin:0 0;">Erase</span>
<svg class="ic" style="left:678px;top:151px" width="469.29999999999995" height="493.20000000000005" viewBox="678 151 469.29999999999995 493.20000000000005"><defs><linearGradient id="bgR" x1="0" y1="0" x2="0" y2="1"><stop offset="0" stop-color="#000"/><stop offset="0.22" stop-color="#050505"/><stop offset="1" stop-color="#3d3d3d"/></linearGradient><linearGradient id="mnR" gradientUnits="userSpaceOnUse" x1="0" y1="153.5" x2="0" y2="642"><stop offset="0" stop-color="#525252"/><stop offset="1" stop-color="#444444"/></linearGradient><linearGradient id="mjR" gradientUnits="userSpaceOnUse" x1="0" y1="153.5" x2="0" y2="642"><stop offset="0" stop-color="#686868"/><stop offset="1" stop-color="#787878"/></linearGradient></defs><rect x="678" y="151" width="469.29999999999995" height="493.20000000000005" fill="#000"/><rect x="680.5" y="153.5" width="466.79999999999995" height="489.1" fill="url(#bgR)"/><path d="M703.75,153.5 V642M750.25,153.5 V642M796.75,153.5 V642M843.25,153.5 V642M889.75,153.5 V642M936.25,153.5 V642M982.75,153.5 V642M1029.25,153.5 V642M1075.75,153.5 V642M1122.25,153.5 V642M680.5,188.39 H1147.3M680.5,258.18 H1147.3M680.5,327.96 H1147.3M680.5,397.75 H1147.3M680.5,467.54 H1147.3M680.5,537.32 H1147.3M680.5,607.11 H1147.3" stroke="url(#mnR)" stroke-width="1" fill="none"/><path d="M680.50,153.5 V642M727.00,153.5 V642M773.50,153.5 V642M820.00,153.5 V642M866.50,153.5 V642M913.00,153.5 V642M959.50,153.5 V642M1006.00,153.5 V642M1052.50,153.5 V642M1099.00,153.5 V642M680.5,153.50 H1147.3M680.5,223.29 H1147.3M680.5,293.07 H1147.3M680.5,362.86 H1147.3M680.5,432.64 H1147.3M680.5,502.43 H1147.3M680.5,572.21 H1147.3" stroke="url(#mjR)" stroke-width="1" fill="none"/><path d="M716.5,607.7h1.3v1.05h-1.3zM725.0,609.5h1.1v1.05h-1.1zM754.0,607.3h1.0v1.05h-1.0zM717.5,608.9h1.0v1.05h-1.0zM720.9,608.3h1.3v1.05h-1.3zM727.2,606.9h1.3v1.05h-1.3zM695.2,609.1h1.1v1.05h-1.1zM721.2,609.1h1.0v1.05h-1.0zM730.6,609.8h1.1v1.05h-1.1zM743.5,608.4h1.1v1.05h-1.1zM688.0,610.2h1.1v1.05h-1.1zM704.6,607.6h1.3v1.05h-1.3zM687.7,609.5h1.3v1.05h-1.3zM744.9,609.1h1.1v1.05h-1.1zM735.6,608.7h1.0v1.05h-1.0zM683.8,607.5h1.0v1.05h-1.0zM758.6,608.7h1.0v1.05h-1.0zM757.2,608.3h1.0v1.05h-1.0zM732.5,607.2h1.0v1.05h-1.0zM729.4,608.3h1.1v1.05h-1.1zM693.0,609.3h1.3v1.05h-1.3zM681.7,609.5h1.3v1.05h-1.3zM722.5,609.4h1.1v1.05h-1.1zM685.2,607.4h1.3v1.05h-1.3zM695.6,609.0h1.0v1.05h-1.0zM699.7,608.5h1.1v1.05h-1.1zM682.9,607.8h1.3v1.05h-1.3zM717.4,608.5h1.3v1.05h-1.3zM715.5,607.9h1.3v1.05h-1.3zM747.5,607.7h1.1v1.05h-1.1zM721.8,608.2h1.3v1.05h-1.3zM731.4,609.5h1.0v1.05h-1.0zM720.2,608.4h1.3v1.05h-1.3zM733.2,609.1h1.3v1.05h-1.3zM716.9,608.4h1.1v1.05h-1.1zM702.6,609.7h1.3v1.05h-1.3zM759.8,608.7h1.1v1.05h-1.1zM759.7,608.7h1.0v1.05h-1.0zM747.3,608.3h1.1v1.05h-1.1zM736.8,608.5h1.3v1.05h-1.3zM705.6,609.0h1.1v1.05h-1.1zM698.8,607.4h1.0v1.05h-1.0zM703.5,608.5h1.3v1.05h-1.3zM686.1,608.3h1.1v1.05h-1.1zM741.4,606.6h1.1v1.05h-1.1zM712.3,609.8h1.1v1.05h-1.1zM747.8,608.6h1.1v1.05h-1.1zM711.2,609.7h1.1v1.05h-1.1zM756.7,610.4h1.1v1.05h-1.1zM747.9,607.3h1.3v1.05h-1.3zM680.5,608.3h1.3v1.05h-1.3zM697.2,609.2h1.0v1.05h-1.0zM752.9,609.0h1.0v1.05h-1.0zM717.9,608.4h1.0v1.05h-1.0zM758.4,608.8h1.3v1.05h-1.3zM712.1,609.2h1.1v1.05h-1.1zM686.3,608.2h1.3v1.05h-1.3zM730.5,609.4h1.1v1.05h-1.1zM742.4,609.8h1.0v1.05h-1.0zM701.9,609.5h1.3v1.05h-1.3zM687.4,607.5h1.3v1.05h-1.3zM706.9,607.5h1.3v1.05h-1.3zM757.1,608.7h1.3v1.05h-1.3zM740.8,608.5h1.1v1.05h-1.1zM689.9,609.2h1.3v1.05h-1.3zM700.1,607.4h1.0v1.05h-1.0zM688.5,609.4h1.0v1.05h-1.0zM685.3,607.7h1.3v1.05h-1.3zM743.9,608.9h1.3v1.05h-1.3zM694.6,609.8h1.0v1.05h-1.0zM725.0,608.8h1.1v1.05h-1.1zM716.1,610.2h1.0v1.05h-1.0zM695.7,608.3h1.0v1.05h-1.0zM738.7,609.4h1.0v1.05h-1.0zM690.9,608.7h1.0v1.05h-1.0zM731.7,608.0h1.0v1.05h-1.0zM689.8,609.0h1.0v1.05h-1.0zM714.0,608.3h1.1v1.05h-1.1zM697.4,607.8h1.1v1.05h-1.1zM701.9,609.3h1.3v1.05h-1.3zM757.7,608.7h1.1v1.05h-1.1zM744.4,608.1h1.3v1.05h-1.3zM704.7,608.5h1.0v1.05h-1.0zM750.8,608.4h1.3v1.05h-1.3zM697.3,607.7h1.1v1.05h-1.1zM711.8,606.7h1.0v1.05h-1.0zM748.4,608.2h1.1v1.05h-1.1zM731.5,607.3h1.3v1.05h-1.3zM688.5,610.4h1.0v1.05h-1.0zM759.1,608.6h1.1v1.05h-1.1zM697.5,608.8h1.3v1.05h-1.3zM701.0,608.8h1.3v1.05h-1.3zM741.9,607.4h1.0v1.05h-1.0zM706.7,608.5h1.0v1.05h-1.0zM704.1,608.9h1.0v1.05h-1.0zM686.3,609.2h1.1v1.05h-1.1zM687.7,609.0h1.0v1.05h-1.0zM726.8,608.4h1.0v1.05h-1.0zM699.8,609.6h1.0v1.05h-1.0zM728.3,608.3h1.1v1.05h-1.1zM710.1,607.8h1.1v1.05h-1.1zM716.5,609.2h1.1v1.05h-1.1zM756.8,608.8h1.3v1.05h-1.3zM811.3,609.5h1.3v1.05h-1.3zM820.9,609.2h1.1v1.05h-1.1zM851.9,608.8h1.1v1.05h-1.1zM779.4,608.0h1.0v1.05h-1.0zM776.3,609.3h1.3v1.05h-1.3zM856.3,609.2h1.0v1.05h-1.0zM846.7,609.6h1.1v1.05h-1.1zM786.4,609.9h1.3v1.05h-1.3zM780.1,607.5h1.3v1.05h-1.3zM838.4,609.7h1.0v1.05h-1.0zM859.7,608.1h1.3v1.05h-1.3zM780.8,607.9h1.1v1.05h-1.1zM860.7,608.2h1.1v1.05h-1.1zM853.5,609.9h1.0v1.05h-1.0zM824.0,607.8h1.1v1.05h-1.1zM804.7,609.2h1.3v1.05h-1.3zM771.0,609.2h1.3v1.05h-1.3zM764.1,607.9h1.0v1.05h-1.0zM862.0,609.3h1.1v1.05h-1.1zM785.3,608.8h1.1v1.05h-1.1zM834.7,609.2h1.1v1.05h-1.1zM787.2,608.5h1.1v1.05h-1.1zM847.3,608.6h1.3v1.05h-1.3zM823.2,608.8h1.1v1.05h-1.1zM791.1,608.4h1.3v1.05h-1.3zM778.6,608.4h1.1v1.05h-1.1zM836.4,609.2h1.3v1.05h-1.3zM767.3,608.8h1.3v1.05h-1.3zM784.2,608.9h1.1v1.05h-1.1zM819.3,607.7h1.1v1.05h-1.1zM850.4,607.4h1.3v1.05h-1.3zM825.1,609.9h1.3v1.05h-1.3zM789.7,608.8h1.0v1.05h-1.0zM857.2,608.6h1.0v1.05h-1.0zM781.6,609.6h1.0v1.05h-1.0zM761.8,608.5h1.1v1.05h-1.1zM788.5,608.5h1.1v1.05h-1.1zM807.2,608.5h1.3v1.05h-1.3zM766.4,609.5h1.3v1.05h-1.3zM778.7,607.6h1.0v1.05h-1.0zM799.1,609.2h1.3v1.05h-1.3zM820.6,607.3h1.3v1.05h-1.3zM773.9,609.1h1.3v1.05h-1.3zM798.4,607.4h1.1v1.05h-1.1zM854.4,606.5h1.0v1.05h-1.0zM863.9,606.7h1.1v1.05h-1.1zM829.6,610.3h1.3v1.05h-1.3zM833.3,608.3h1.1v1.05h-1.1zM822.0,608.4h1.1v1.05h-1.1zM774.9,608.4h1.1v1.05h-1.1zM763.7,609.5h1.1v1.05h-1.1zM761.9,607.5h1.1v1.05h-1.1zM856.5,608.4h1.3v1.05h-1.3zM834.3,609.9h1.3v1.05h-1.3zM862.1,608.0h1.1v1.05h-1.1zM762.3,610.2h1.3v1.05h-1.3zM827.4,608.9h1.0v1.05h-1.0zM811.1,607.9h1.3v1.05h-1.3zM837.4,607.9h1.1v1.05h-1.1zM793.8,609.4h1.1v1.05h-1.1zM865.9,608.9h1.0v1.05h-1.0zM768.0,607.3h1.1v1.05h-1.1zM817.9,607.9h1.0v1.05h-1.0zM838.1,608.8h1.3v1.05h-1.3zM855.4,608.0h1.1v1.05h-1.1zM838.1,608.6h1.0v1.05h-1.0zM834.6,610.2h1.3v1.05h-1.3zM844.1,610.0h1.1v1.05h-1.1zM857.0,609.6h1.0v1.05h-1.0zM797.3,610.3h1.3v1.05h-1.3zM832.6,608.4h1.3v1.05h-1.3zM855.5,609.6h1.1v1.05h-1.1zM852.3,609.5h1.0v1.05h-1.0zM804.2,608.7h1.3v1.05h-1.3zM843.8,608.9h1.0v1.05h-1.0zM851.5,609.3h1.3v1.05h-1.3zM820.7,609.3h1.1v1.05h-1.1zM826.2,607.9h1.3v1.05h-1.3zM800.5,608.8h1.3v1.05h-1.3zM821.8,607.2h1.3v1.05h-1.3zM824.5,609.4h1.0v1.05h-1.0zM768.5,610.1h1.0v1.05h-1.0zM827.8,608.1h1.1v1.05h-1.1zM865.3,610.1h1.3v1.05h-1.3zM853.3,609.9h1.3v1.05h-1.3zM837.2,609.0h1.3v1.05h-1.3zM801.2,608.0h1.3v1.05h-1.3zM837.9,608.4h1.0v1.05h-1.0zM821.6,607.1h1.3v1.05h-1.3zM806.7,608.5h1.0v1.05h-1.0zM848.9,609.3h1.3v1.05h-1.3zM768.9,610.7h1.3v1.05h-1.3zM839.5,608.3h1.0v1.05h-1.0zM763.2,608.5h1.1v1.05h-1.1zM823.7,608.5h1.1v1.05h-1.1zM811.0,608.9h1.0v1.05h-1.0zM784.4,608.6h1.3v1.05h-1.3zM834.0,608.3h1.3v1.05h-1.3zM812.7,610.2h1.0v1.05h-1.0zM825.1,607.3h1.1v1.05h-1.1zM857.6,608.2h1.1v1.05h-1.1zM882.4,608.0h1.1v1.05h-1.1zM866.7,608.7h1.1v1.05h-1.1zM885.3,608.5h1.0v1.05h-1.0zM909.4,606.8h1.0v1.05h-1.0zM879.0,606.9h1.0v1.05h-1.0zM876.9,609.2h1.1v1.05h-1.1zM924.0,607.9h1.0v1.05h-1.0zM908.2,608.9h1.1v1.05h-1.1zM894.3,609.6h1.3v1.05h-1.3zM923.1,610.1h1.1v1.05h-1.1zM886.9,608.2h1.0v1.05h-1.0zM908.6,610.2h1.1v1.05h-1.1zM878.7,607.9h1.1v1.05h-1.1zM893.6,607.6h1.1v1.05h-1.1zM917.6,608.9h1.3v1.05h-1.3zM924.5,608.8h1.3v1.05h-1.3zM922.3,607.2h1.1v1.05h-1.1zM890.6,608.7h1.0v1.05h-1.0zM903.3,609.2h1.3v1.05h-1.3zM886.3,608.9h1.3v1.05h-1.3zM874.7,609.3h1.3v1.05h-1.3zM897.8,609.0h1.3v1.05h-1.3zM919.6,607.7h1.0v1.05h-1.0zM920.3,610.3h1.1v1.05h-1.1zM911.5,608.1h1.0v1.05h-1.0zM926.8,607.9h1.1v1.05h-1.1zM883.7,608.3h1.3v1.05h-1.3zM876.8,607.4h1.1v1.05h-1.1zM894.8,607.0h1.1v1.05h-1.1zM883.6,609.3h1.1v1.05h-1.1zM879.7,608.2h1.3v1.05h-1.3zM892.5,609.5h1.3v1.05h-1.3zM906.0,608.6h1.1v1.05h-1.1zM897.6,609.5h1.0v1.05h-1.0zM886.2,608.0h1.1v1.05h-1.1zM919.7,609.3h1.0v1.05h-1.0zM928.9,608.5h1.1v1.05h-1.1zM895.0,607.7h1.3v1.05h-1.3zM870.8,609.3h1.0v1.05h-1.0zM868.0,609.6h1.0v1.05h-1.0zM921.9,609.5h1.1v1.05h-1.1zM868.7,609.2h1.0v1.05h-1.0zM911.4,608.7h1.0v1.05h-1.0zM902.5,608.9h1.3v1.05h-1.3zM885.8,608.5h1.1v1.05h-1.1zM973.5,608.8h1.0v1.05h-1.0zM931.1,607.9h1.3v1.05h-1.3zM937.5,608.2h1.0v1.05h-1.0zM955.0,608.2h1.0v1.05h-1.0zM931.4,609.3h1.1v1.05h-1.1zM975.6,609.8h1.0v1.05h-1.0zM943.1,609.3h1.0v1.05h-1.0zM937.7,608.6h1.0v1.05h-1.0zM932.6,607.2h1.3v1.05h-1.3zM964.6,608.9h1.3v1.05h-1.3zM954.6,610.2h1.1v1.05h-1.1zM964.6,608.7h1.1v1.05h-1.1zM966.0,607.7h1.1v1.05h-1.1zM974.4,608.1h1.3v1.05h-1.3zM982.7,607.6h1.3v1.05h-1.3zM967.6,609.8h1.0v1.05h-1.0zM941.0,609.2h1.1v1.05h-1.1zM956.1,608.7h1.1v1.05h-1.1zM939.8,605.8h1.0v1.05h-1.0zM930.6,609.2h1.1v1.05h-1.1zM956.0,606.9h1.3v1.05h-1.3zM969.3,607.9h1.3v1.05h-1.3zM939.9,607.7h1.0v1.05h-1.0zM945.0,608.9h1.1v1.05h-1.1zM949.0,607.7h1.0v1.05h-1.0zM1002.4,608.6h1.3v1.05h-1.3zM998.0,609.2h1.1v1.05h-1.1zM1000.4,608.3h1.1v1.05h-1.1zM1003.9,607.8h1.1v1.05h-1.1zM994.8,607.9h1.0v1.05h-1.0zM1004.8,608.5h1.1v1.05h-1.1zM1087.9,608.4h1.3v1.05h-1.3zM1017.5,609.0h1.0v1.05h-1.0zM1090.2,608.7h1.0v1.05h-1.0zM1072.1,608.0h1.1v1.05h-1.1zM1021.2,609.7h1.0v1.05h-1.0zM1049.0,608.7h1.1v1.05h-1.1zM1063.8,609.1h1.0v1.05h-1.0zM1088.3,609.0h1.3v1.05h-1.3zM699.2,616.1h1.0v1.05h-1.0zM737.5,618.0h1.1v1.05h-1.1zM727.8,616.9h1.3v1.05h-1.3zM698.3,617.2h1.1v1.05h-1.1zM695.2,616.8h1.3v1.05h-1.3zM702.8,615.7h1.3v1.05h-1.3zM694.2,617.5h1.0v1.05h-1.0zM740.7,615.8h1.1v1.05h-1.1zM705.3,617.1h1.0v1.05h-1.0zM724.1,616.2h1.1v1.05h-1.1zM745.5,617.5h1.1v1.05h-1.1zM718.6,617.6h1.0v1.05h-1.0zM701.2,615.5h1.3v1.05h-1.3zM751.0,617.0h1.0v1.05h-1.0zM753.2,617.9h1.3v1.05h-1.3zM707.7,616.7h1.1v1.05h-1.1zM724.0,615.5h1.0v1.05h-1.0zM756.6,617.2h1.1v1.05h-1.1zM718.9,617.2h1.0v1.05h-1.0zM698.1,616.6h1.1v1.05h-1.1zM684.5,616.6h1.0v1.05h-1.0zM755.8,616.4h1.0v1.05h-1.0zM744.2,615.1h1.3v1.05h-1.3zM711.1,615.1h1.1v1.05h-1.1zM722.4,618.6h1.0v1.05h-1.0zM721.5,616.6h1.0v1.05h-1.0zM702.3,618.1h1.1v1.05h-1.1zM759.2,617.2h1.1v1.05h-1.1zM732.8,615.7h1.3v1.05h-1.3zM699.4,615.2h1.1v1.05h-1.1zM681.4,614.8h1.3v1.05h-1.3zM718.1,616.5h1.3v1.05h-1.3zM710.0,616.6h1.3v1.05h-1.3zM743.8,615.4h1.0v1.05h-1.0zM737.2,617.4h1.3v1.05h-1.3zM728.7,617.3h1.1v1.05h-1.1zM693.0,615.9h1.3v1.05h-1.3zM693.0,616.4h1.3v1.05h-1.3zM706.1,616.7h1.0v1.05h-1.0zM701.1,617.7h1.3v1.05h-1.3zM749.6,616.0h1.0v1.05h-1.0zM721.5,616.2h1.3v1.05h-1.3zM731.1,616.9h1.1v1.05h-1.1zM759.5,616.5h1.0v1.05h-1.0zM701.7,616.0h1.3v1.05h-1.3zM723.0,617.8h1.1v1.05h-1.1zM692.5,617.0h1.3v1.05h-1.3zM741.7,615.5h1.1v1.05h-1.1zM680.6,616.7h1.0v1.05h-1.0zM745.8,616.4h1.0v1.05h-1.0zM747.8,615.5h1.3v1.05h-1.3zM745.9,616.1h1.0v1.05h-1.0zM687.1,616.4h1.1v1.05h-1.1zM702.0,616.4h1.0v1.05h-1.0zM737.5,616.0h1.3v1.05h-1.3zM688.2,614.9h1.3v1.05h-1.3zM718.7,616.9h1.1v1.05h-1.1zM717.8,615.0h1.0v1.05h-1.0zM756.5,615.9h1.1v1.05h-1.1zM727.1,615.7h1.1v1.05h-1.1zM748.7,616.6h1.3v1.05h-1.3zM704.6,617.7h1.3v1.05h-1.3zM743.3,616.7h1.1v1.05h-1.1zM713.6,616.3h1.1v1.05h-1.1zM753.4,616.2h1.0v1.05h-1.0zM687.7,617.1h1.0v1.05h-1.0zM746.2,615.0h1.0v1.05h-1.0zM697.1,616.7h1.0v1.05h-1.0zM723.7,616.6h1.0v1.05h-1.0zM722.3,615.4h1.0v1.05h-1.0zM693.0,616.7h1.0v1.05h-1.0zM746.6,618.6h1.0v1.05h-1.0zM705.3,616.0h1.1v1.05h-1.1zM705.2,617.1h1.0v1.05h-1.0zM686.5,618.0h1.3v1.05h-1.3zM704.8,616.3h1.3v1.05h-1.3zM717.6,616.0h1.0v1.05h-1.0zM737.4,616.1h1.3v1.05h-1.3zM709.1,617.2h1.0v1.05h-1.0zM735.1,615.8h1.0v1.05h-1.0zM688.9,616.0h1.3v1.05h-1.3zM711.8,617.2h1.0v1.05h-1.0zM717.2,617.5h1.3v1.05h-1.3zM757.4,616.8h1.0v1.05h-1.0zM746.5,616.5h1.3v1.05h-1.3zM732.5,615.4h1.0v1.05h-1.0zM681.5,615.7h1.0v1.05h-1.0zM710.5,616.8h1.1v1.05h-1.1zM736.9,616.4h1.1v1.05h-1.1zM699.4,616.8h1.1v1.05h-1.1zM725.3,616.6h1.0v1.05h-1.0zM716.9,618.3h1.1v1.05h-1.1zM681.3,616.8h1.1v1.05h-1.1zM759.3,617.2h1.1v1.05h-1.1zM744.1,615.5h1.3v1.05h-1.3zM696.9,616.8h1.3v1.05h-1.3zM729.5,617.1h1.3v1.05h-1.3zM703.6,617.6h1.1v1.05h-1.1zM710.4,616.3h1.1v1.05h-1.1zM723.4,616.7h1.1v1.05h-1.1zM704.2,617.9h1.3v1.05h-1.3zM707.3,616.2h1.0v1.05h-1.0zM711.7,616.5h1.3v1.05h-1.3zM733.5,615.5h1.3v1.05h-1.3zM700.9,616.4h1.1v1.05h-1.1zM696.4,615.9h1.0v1.05h-1.0zM738.6,617.9h1.1v1.05h-1.1zM706.7,618.4h1.0v1.05h-1.0zM755.6,616.7h1.0v1.05h-1.0zM725.2,615.1h1.0v1.05h-1.0zM738.0,618.4h1.1v1.05h-1.1zM795.2,616.6h1.0v1.05h-1.0zM847.6,617.2h1.1v1.05h-1.1zM769.8,615.9h1.3v1.05h-1.3zM774.9,616.2h1.3v1.05h-1.3zM770.0,615.9h1.0v1.05h-1.0zM831.8,616.0h1.3v1.05h-1.3zM835.1,616.6h1.3v1.05h-1.3zM779.1,617.1h1.1v1.05h-1.1zM802.6,617.1h1.1v1.05h-1.1zM848.7,615.2h1.3v1.05h-1.3zM822.8,616.8h1.3v1.05h-1.3zM769.6,615.8h1.1v1.05h-1.1zM784.0,616.4h1.3v1.05h-1.3zM776.7,615.2h1.1v1.05h-1.1zM773.2,618.0h1.3v1.05h-1.3zM803.1,616.4h1.1v1.05h-1.1zM767.7,615.7h1.3v1.05h-1.3zM857.6,617.1h1.1v1.05h-1.1zM805.3,616.1h1.1v1.05h-1.1zM814.2,616.2h1.0v1.05h-1.0zM828.6,617.1h1.0v1.05h-1.0zM841.3,616.6h1.0v1.05h-1.0zM847.0,615.5h1.3v1.05h-1.3zM800.9,616.2h1.0v1.05h-1.0zM795.1,618.0h1.3v1.05h-1.3zM803.7,616.1h1.1v1.05h-1.1zM761.6,615.3h1.0v1.05h-1.0zM802.5,616.8h1.1v1.05h-1.1zM834.2,615.9h1.0v1.05h-1.0zM864.1,616.3h1.1v1.05h-1.1zM843.7,616.8h1.1v1.05h-1.1zM830.0,616.3h1.0v1.05h-1.0zM824.5,618.0h1.0v1.05h-1.0zM762.0,617.2h1.0v1.05h-1.0zM795.1,616.3h1.1v1.05h-1.1zM796.3,616.2h1.0v1.05h-1.0zM829.0,616.0h1.3v1.05h-1.3zM771.3,616.1h1.0v1.05h-1.0zM800.0,617.4h1.1v1.05h-1.1zM814.0,615.3h1.3v1.05h-1.3zM843.6,615.9h1.1v1.05h-1.1zM847.5,616.5h1.1v1.05h-1.1zM824.8,616.4h1.0v1.05h-1.0zM776.8,616.4h1.1v1.05h-1.1zM841.3,616.9h1.1v1.05h-1.1zM855.7,617.6h1.3v1.05h-1.3zM818.1,617.0h1.1v1.05h-1.1zM797.4,615.8h1.1v1.05h-1.1zM813.0,616.8h1.0v1.05h-1.0zM775.0,617.5h1.1v1.05h-1.1zM835.6,616.7h1.3v1.05h-1.3zM864.6,616.1h1.0v1.05h-1.0zM814.7,618.3h1.3v1.05h-1.3zM835.8,615.3h1.1v1.05h-1.1zM848.6,616.9h1.0v1.05h-1.0zM780.9,614.6h1.0v1.05h-1.0zM860.2,615.6h1.3v1.05h-1.3zM826.5,617.7h1.3v1.05h-1.3zM781.0,617.0h1.1v1.05h-1.1zM768.8,616.9h1.1v1.05h-1.1zM785.9,616.7h1.1v1.05h-1.1zM821.1,615.1h1.0v1.05h-1.0zM833.9,618.0h1.0v1.05h-1.0zM794.9,616.3h1.1v1.05h-1.1zM858.5,615.9h1.1v1.05h-1.1zM798.3,616.4h1.3v1.05h-1.3zM809.1,616.6h1.0v1.05h-1.0zM773.1,616.5h1.0v1.05h-1.0zM863.2,617.3h1.0v1.05h-1.0zM774.4,614.4h1.1v1.05h-1.1zM855.8,616.3h1.0v1.05h-1.0zM817.6,616.7h1.3v1.05h-1.3zM819.4,617.7h1.3v1.05h-1.3zM819.4,618.2h1.3v1.05h-1.3zM788.0,617.4h1.1v1.05h-1.1zM856.4,616.6h1.0v1.05h-1.0zM865.2,617.0h1.1v1.05h-1.1zM846.7,616.8h1.1v1.05h-1.1zM823.8,616.0h1.3v1.05h-1.3zM773.0,616.9h1.0v1.05h-1.0zM847.4,617.1h1.0v1.05h-1.0zM790.6,615.9h1.3v1.05h-1.3zM855.1,617.9h1.1v1.05h-1.1zM785.5,616.1h1.3v1.05h-1.3zM820.8,617.2h1.3v1.05h-1.3zM848.1,615.9h1.0v1.05h-1.0zM779.7,616.5h1.1v1.05h-1.1zM818.1,616.3h1.3v1.05h-1.3zM768.1,617.1h1.3v1.05h-1.3zM763.4,616.8h1.0v1.05h-1.0zM779.1,616.8h1.0v1.05h-1.0zM864.6,617.2h1.1v1.05h-1.1zM859.6,616.1h1.3v1.05h-1.3zM829.8,616.8h1.0v1.05h-1.0zM792.6,615.5h1.3v1.05h-1.3zM831.2,617.9h1.0v1.05h-1.0zM838.2,615.2h1.1v1.05h-1.1zM800.5,616.6h1.3v1.05h-1.3zM822.7,617.7h1.1v1.05h-1.1zM845.2,616.6h1.1v1.05h-1.1zM761.7,617.9h1.3v1.05h-1.3zM781.2,616.4h1.0v1.05h-1.0zM809.6,616.0h1.3v1.05h-1.3zM775.2,617.2h1.1v1.05h-1.1zM801.0,615.5h1.3v1.05h-1.3zM820.4,616.2h1.1v1.05h-1.1zM778.4,615.3h1.0v1.05h-1.0zM815.1,617.3h1.3v1.05h-1.3zM787.9,617.3h1.1v1.05h-1.1zM820.2,616.7h1.0v1.05h-1.0zM795.2,617.2h1.1v1.05h-1.1zM907.1,614.7h1.0v1.05h-1.0zM868.4,615.4h1.1v1.05h-1.1zM908.9,616.2h1.3v1.05h-1.3zM875.3,615.7h1.3v1.05h-1.3zM927.4,614.8h1.0v1.05h-1.0zM904.4,617.9h1.0v1.05h-1.0zM896.1,618.4h1.0v1.05h-1.0zM892.3,619.3h1.0v1.05h-1.0zM905.9,616.3h1.0v1.05h-1.0zM910.1,618.1h1.1v1.05h-1.1zM914.5,616.5h1.3v1.05h-1.3zM914.1,616.8h1.1v1.05h-1.1zM897.1,616.8h1.1v1.05h-1.1zM929.7,616.9h1.3v1.05h-1.3zM919.6,616.4h1.3v1.05h-1.3zM920.7,617.5h1.1v1.05h-1.1zM892.2,616.9h1.1v1.05h-1.1zM893.8,613.9h1.3v1.05h-1.3zM902.2,616.2h1.0v1.05h-1.0zM923.9,615.5h1.1v1.05h-1.1zM899.7,616.8h1.1v1.05h-1.1zM899.6,617.0h1.1v1.05h-1.1zM893.7,616.1h1.0v1.05h-1.0zM923.9,616.8h1.1v1.05h-1.1zM886.5,616.1h1.3v1.05h-1.3zM869.5,616.4h1.1v1.05h-1.1zM912.4,616.5h1.1v1.05h-1.1zM923.6,617.3h1.0v1.05h-1.0zM912.8,616.1h1.0v1.05h-1.0zM904.2,617.1h1.0v1.05h-1.0zM914.1,618.4h1.1v1.05h-1.1zM885.5,617.4h1.3v1.05h-1.3zM904.0,617.1h1.1v1.05h-1.1zM870.5,616.9h1.0v1.05h-1.0zM874.0,617.2h1.1v1.05h-1.1zM894.6,616.6h1.1v1.05h-1.1zM898.2,617.5h1.3v1.05h-1.3zM891.4,616.8h1.1v1.05h-1.1zM869.3,616.0h1.3v1.05h-1.3zM910.5,616.4h1.3v1.05h-1.3zM899.7,616.9h1.0v1.05h-1.0zM881.3,616.0h1.1v1.05h-1.1zM885.6,618.6h1.1v1.05h-1.1zM891.3,614.3h1.3v1.05h-1.3zM881.1,617.4h1.0v1.05h-1.0zM870.4,615.3h1.0v1.05h-1.0zM924.3,617.7h1.3v1.05h-1.3zM927.9,616.2h1.0v1.05h-1.0zM908.6,616.6h1.3v1.05h-1.3zM921.5,616.8h1.1v1.05h-1.1zM893.0,617.6h1.0v1.05h-1.0zM974.3,617.0h1.0v1.05h-1.0zM942.2,616.7h1.3v1.05h-1.3zM971.1,616.6h1.1v1.05h-1.1zM961.2,617.2h1.3v1.05h-1.3zM979.7,615.0h1.1v1.05h-1.1zM935.4,615.2h1.3v1.05h-1.3zM973.6,617.6h1.0v1.05h-1.0zM936.8,617.6h1.3v1.05h-1.3zM959.6,616.2h1.1v1.05h-1.1zM982.3,616.6h1.0v1.05h-1.0zM930.0,618.7h1.0v1.05h-1.0zM943.4,616.0h1.1v1.05h-1.1zM946.5,616.3h1.3v1.05h-1.3zM947.9,615.7h1.1v1.05h-1.1zM933.4,617.6h1.3v1.05h-1.3zM979.2,616.0h1.1v1.05h-1.1zM974.8,615.9h1.0v1.05h-1.0zM951.8,617.3h1.0v1.05h-1.0zM949.6,616.1h1.1v1.05h-1.1zM962.2,615.8h1.0v1.05h-1.0zM932.5,617.9h1.0v1.05h-1.0zM931.7,616.5h1.3v1.05h-1.3zM979.4,615.4h1.0v1.05h-1.0zM946.9,616.8h1.0v1.05h-1.0zM957.4,617.0h1.1v1.05h-1.1zM981.4,616.0h1.0v1.05h-1.0zM983.8,617.4h1.1v1.05h-1.1zM956.0,615.6h1.1v1.05h-1.1zM941.4,616.6h1.3v1.05h-1.3zM946.2,617.5h1.0v1.05h-1.0zM1008.1,615.2h1.0v1.05h-1.0zM1007.4,615.9h1.0v1.05h-1.0zM989.9,618.0h1.3v1.05h-1.3zM1005.9,617.6h1.0v1.05h-1.0zM993.9,616.5h1.1v1.05h-1.1zM996.8,615.4h1.0v1.05h-1.0zM989.3,617.4h1.1v1.05h-1.1zM1007.0,617.5h1.1v1.05h-1.1zM1009.9,617.0h1.0v1.05h-1.0zM1032.8,616.8h1.0v1.05h-1.0zM1081.5,615.5h1.0v1.05h-1.0zM1031.6,616.4h1.3v1.05h-1.3zM1109.5,615.2h1.0v1.05h-1.0zM1015.7,616.9h1.1v1.05h-1.1zM1022.0,617.9h1.3v1.05h-1.3zM1092.0,615.8h1.3v1.05h-1.3zM1045.4,615.8h1.0v1.05h-1.0zM1111.7,617.7h1.3v1.05h-1.3zM1108.3,617.7h1.1v1.05h-1.1zM1090.6,615.6h1.1v1.05h-1.1zM1025.2,617.0h1.3v1.05h-1.3zM1088.6,616.8h1.3v1.05h-1.3zM1116.0,617.9h1.0v1.05h-1.0zM1060.3,616.4h1.3v1.05h-1.3zM1018.9,616.6h1.1v1.05h-1.1zM1035.2,615.4h1.3v1.05h-1.3zM684.8,622.1h1.0v1.05h-1.0zM706.3,621.6h1.3v1.05h-1.3zM723.2,621.7h1.1v1.05h-1.1zM706.6,620.5h1.0v1.05h-1.0zM700.9,622.4h1.0v1.05h-1.0zM730.0,621.9h1.0v1.05h-1.0zM695.5,620.7h1.1v1.05h-1.1zM717.8,621.8h1.0v1.05h-1.0zM724.4,620.3h1.1v1.05h-1.1zM684.7,621.0h1.0v1.05h-1.0zM757.5,623.1h1.0v1.05h-1.0zM740.4,622.6h1.3v1.05h-1.3zM751.8,621.5h1.3v1.05h-1.3zM689.3,622.1h1.1v1.05h-1.1zM695.4,622.0h1.3v1.05h-1.3zM754.0,622.9h1.0v1.05h-1.0zM743.3,621.4h1.0v1.05h-1.0zM691.8,620.7h1.0v1.05h-1.0zM689.6,622.3h1.0v1.05h-1.0zM688.8,622.5h1.0v1.05h-1.0zM700.5,620.9h1.1v1.05h-1.1zM701.3,622.3h1.3v1.05h-1.3zM695.2,621.4h1.1v1.05h-1.1zM683.5,620.2h1.1v1.05h-1.1zM707.7,621.8h1.3v1.05h-1.3zM721.7,621.8h1.3v1.05h-1.3zM708.2,621.3h1.0v1.05h-1.0zM697.0,621.8h1.0v1.05h-1.0zM681.6,620.9h1.1v1.05h-1.1zM714.4,622.3h1.1v1.05h-1.1zM719.4,620.5h1.3v1.05h-1.3zM757.0,622.2h1.1v1.05h-1.1zM699.5,620.3h1.3v1.05h-1.3zM689.0,620.8h1.3v1.05h-1.3zM715.5,621.1h1.0v1.05h-1.0zM740.7,619.1h1.1v1.05h-1.1zM750.2,622.0h1.0v1.05h-1.0zM686.2,621.5h1.1v1.05h-1.1zM720.0,621.0h1.1v1.05h-1.1zM684.9,621.5h1.1v1.05h-1.1zM749.7,620.5h1.0v1.05h-1.0zM757.8,621.9h1.0v1.05h-1.0zM685.7,621.0h1.3v1.05h-1.3zM755.4,622.2h1.0v1.05h-1.0zM745.0,623.7h1.3v1.05h-1.3zM694.7,622.1h1.3v1.05h-1.3zM707.0,622.6h1.1v1.05h-1.1zM754.3,621.3h1.0v1.05h-1.0zM756.4,622.0h1.3v1.05h-1.3zM698.0,622.4h1.0v1.05h-1.0zM703.4,622.2h1.0v1.05h-1.0zM713.6,622.6h1.0v1.05h-1.0zM729.3,621.7h1.3v1.05h-1.3zM683.0,620.6h1.1v1.05h-1.1zM734.7,621.8h1.1v1.05h-1.1zM717.5,621.8h1.0v1.05h-1.0zM719.4,621.3h1.0v1.05h-1.0zM687.5,623.6h1.3v1.05h-1.3zM732.1,621.5h1.3v1.05h-1.3zM722.8,621.4h1.0v1.05h-1.0zM705.7,622.2h1.3v1.05h-1.3zM756.6,623.3h1.1v1.05h-1.1zM757.6,624.5h1.3v1.05h-1.3zM725.0,621.5h1.3v1.05h-1.3zM759.6,622.1h1.1v1.05h-1.1zM710.6,620.3h1.1v1.05h-1.1zM745.4,620.6h1.0v1.05h-1.0zM736.1,621.7h1.3v1.05h-1.3zM747.6,621.9h1.1v1.05h-1.1zM755.7,621.3h1.3v1.05h-1.3zM732.8,621.0h1.0v1.05h-1.0zM697.1,621.7h1.0v1.05h-1.0zM697.2,622.1h1.1v1.05h-1.1zM741.4,622.3h1.0v1.05h-1.0zM694.1,619.5h1.1v1.05h-1.1zM726.7,622.7h1.0v1.05h-1.0zM683.8,623.3h1.3v1.05h-1.3zM702.6,623.1h1.0v1.05h-1.0zM701.1,622.6h1.3v1.05h-1.3zM707.8,621.7h1.3v1.05h-1.3zM730.0,620.2h1.3v1.05h-1.3zM704.9,621.7h1.1v1.05h-1.1zM681.1,622.0h1.3v1.05h-1.3zM686.0,621.9h1.1v1.05h-1.1zM696.8,621.0h1.3v1.05h-1.3zM737.6,620.6h1.3v1.05h-1.3zM749.7,622.8h1.3v1.05h-1.3zM741.7,621.5h1.0v1.05h-1.0zM696.4,623.2h1.0v1.05h-1.0zM686.2,622.1h1.3v1.05h-1.3zM701.6,621.6h1.3v1.05h-1.3zM710.3,623.5h1.0v1.05h-1.0zM729.2,622.6h1.3v1.05h-1.3zM702.7,622.3h1.1v1.05h-1.1zM691.1,621.5h1.1v1.05h-1.1zM690.3,621.4h1.3v1.05h-1.3zM688.1,622.1h1.3v1.05h-1.3zM721.3,621.9h1.3v1.05h-1.3zM713.7,621.8h1.0v1.05h-1.0zM719.7,623.1h1.3v1.05h-1.3zM689.8,621.5h1.3v1.05h-1.3zM690.3,622.7h1.0v1.05h-1.0zM750.2,622.2h1.0v1.05h-1.0zM860.9,620.8h1.1v1.05h-1.1zM768.3,621.6h1.0v1.05h-1.0zM828.7,622.0h1.0v1.05h-1.0zM783.9,621.4h1.1v1.05h-1.1zM810.6,622.2h1.0v1.05h-1.0zM781.1,623.1h1.3v1.05h-1.3zM803.9,623.6h1.0v1.05h-1.0zM783.4,621.0h1.0v1.05h-1.0zM827.8,622.3h1.0v1.05h-1.0zM798.9,621.3h1.3v1.05h-1.3zM795.3,621.6h1.3v1.05h-1.3zM821.9,622.2h1.0v1.05h-1.0zM829.8,623.1h1.0v1.05h-1.0zM788.4,620.0h1.3v1.05h-1.3zM830.1,620.4h1.3v1.05h-1.3zM761.3,621.8h1.3v1.05h-1.3zM824.7,620.7h1.0v1.05h-1.0zM761.6,620.8h1.0v1.05h-1.0zM799.7,621.8h1.0v1.05h-1.0zM822.9,621.1h1.0v1.05h-1.0zM851.8,623.2h1.0v1.05h-1.0zM801.1,622.9h1.1v1.05h-1.1zM789.5,623.5h1.3v1.05h-1.3zM770.8,622.1h1.3v1.05h-1.3zM853.3,620.5h1.3v1.05h-1.3zM841.5,621.5h1.0v1.05h-1.0zM771.1,622.1h1.0v1.05h-1.0zM829.7,621.7h1.1v1.05h-1.1zM808.0,622.2h1.1v1.05h-1.1zM782.2,620.9h1.0v1.05h-1.0zM843.7,621.6h1.0v1.05h-1.0zM761.7,621.8h1.1v1.05h-1.1zM763.2,622.6h1.3v1.05h-1.3zM822.6,622.0h1.1v1.05h-1.1zM833.9,620.8h1.3v1.05h-1.3zM864.9,621.6h1.0v1.05h-1.0zM846.5,622.6h1.0v1.05h-1.0zM852.6,621.3h1.0v1.05h-1.0zM830.8,621.9h1.0v1.05h-1.0zM776.5,622.7h1.1v1.05h-1.1zM767.7,622.3h1.3v1.05h-1.3zM778.1,623.0h1.1v1.05h-1.1zM813.6,620.7h1.3v1.05h-1.3zM810.8,621.0h1.0v1.05h-1.0zM829.1,622.0h1.1v1.05h-1.1zM766.5,622.3h1.3v1.05h-1.3zM783.6,621.0h1.3v1.05h-1.3zM762.2,623.0h1.0v1.05h-1.0zM843.7,622.0h1.0v1.05h-1.0zM805.9,620.6h1.3v1.05h-1.3zM784.4,621.8h1.0v1.05h-1.0zM817.4,621.0h1.0v1.05h-1.0zM771.7,619.2h1.1v1.05h-1.1zM766.1,623.2h1.3v1.05h-1.3zM866.0,620.4h1.1v1.05h-1.1zM829.6,623.3h1.0v1.05h-1.0zM843.8,620.5h1.0v1.05h-1.0zM858.8,622.4h1.1v1.05h-1.1zM814.9,622.3h1.1v1.05h-1.1zM821.9,621.7h1.3v1.05h-1.3zM812.7,620.4h1.1v1.05h-1.1zM848.0,620.8h1.0v1.05h-1.0zM814.6,621.9h1.0v1.05h-1.0zM770.2,621.8h1.1v1.05h-1.1zM844.2,622.2h1.0v1.05h-1.0zM760.4,621.4h1.0v1.05h-1.0zM861.6,623.4h1.1v1.05h-1.1zM833.8,620.0h1.1v1.05h-1.1zM843.4,622.0h1.3v1.05h-1.3zM856.0,622.1h1.1v1.05h-1.1zM830.3,622.3h1.0v1.05h-1.0zM862.8,621.5h1.3v1.05h-1.3zM810.2,620.8h1.3v1.05h-1.3zM853.7,619.9h1.3v1.05h-1.3zM805.9,620.8h1.0v1.05h-1.0zM776.5,622.0h1.1v1.05h-1.1zM799.3,622.9h1.0v1.05h-1.0zM798.8,623.2h1.3v1.05h-1.3zM848.2,621.5h1.1v1.05h-1.1zM853.5,621.9h1.1v1.05h-1.1zM771.5,621.9h1.3v1.05h-1.3zM803.8,622.1h1.3v1.05h-1.3zM819.5,620.5h1.3v1.05h-1.3zM863.3,621.4h1.1v1.05h-1.1zM842.3,622.1h1.0v1.05h-1.0zM770.0,621.6h1.0v1.05h-1.0zM865.9,622.4h1.3v1.05h-1.3zM819.8,622.1h1.3v1.05h-1.3zM767.2,622.7h1.3v1.05h-1.3zM785.2,624.0h1.3v1.05h-1.3zM830.2,622.6h1.3v1.05h-1.3zM814.0,622.4h1.1v1.05h-1.1zM792.7,619.8h1.1v1.05h-1.1zM797.4,624.3h1.1v1.05h-1.1zM786.1,622.2h1.1v1.05h-1.1zM822.6,621.8h1.3v1.05h-1.3zM809.4,623.3h1.1v1.05h-1.1zM864.9,621.9h1.3v1.05h-1.3zM822.4,622.2h1.0v1.05h-1.0zM778.0,621.9h1.1v1.05h-1.1zM771.1,621.6h1.0v1.05h-1.0zM774.6,621.0h1.0v1.05h-1.0zM855.2,622.0h1.1v1.05h-1.1zM845.8,623.4h1.3v1.05h-1.3zM813.4,621.1h1.0v1.05h-1.0zM775.3,620.8h1.1v1.05h-1.1zM902.1,622.5h1.0v1.05h-1.0zM877.1,621.8h1.1v1.05h-1.1zM905.6,621.6h1.1v1.05h-1.1zM927.7,623.0h1.3v1.05h-1.3zM911.6,620.4h1.1v1.05h-1.1zM873.6,621.9h1.0v1.05h-1.0zM918.6,620.5h1.3v1.05h-1.3zM880.6,623.2h1.3v1.05h-1.3zM917.0,620.7h1.1v1.05h-1.1zM873.0,622.3h1.1v1.05h-1.1zM913.2,620.7h1.0v1.05h-1.0zM890.1,623.5h1.3v1.05h-1.3zM884.8,623.4h1.3v1.05h-1.3zM905.6,621.0h1.0v1.05h-1.0zM891.9,620.5h1.1v1.05h-1.1zM897.6,621.9h1.0v1.05h-1.0zM924.4,622.5h1.3v1.05h-1.3zM900.8,621.4h1.3v1.05h-1.3zM914.8,620.5h1.1v1.05h-1.1zM915.6,622.5h1.1v1.05h-1.1zM890.9,620.8h1.0v1.05h-1.0zM885.2,620.7h1.1v1.05h-1.1zM879.7,621.2h1.3v1.05h-1.3zM900.4,621.8h1.3v1.05h-1.3zM908.1,620.9h1.3v1.05h-1.3zM892.8,620.5h1.1v1.05h-1.1zM923.3,620.8h1.3v1.05h-1.3zM879.0,622.4h1.3v1.05h-1.3zM929.6,621.3h1.1v1.05h-1.1zM901.8,621.8h1.3v1.05h-1.3zM874.8,620.3h1.0v1.05h-1.0zM928.8,621.9h1.1v1.05h-1.1zM925.3,621.4h1.1v1.05h-1.1zM872.2,621.6h1.0v1.05h-1.0zM906.0,621.9h1.0v1.05h-1.0zM883.1,623.5h1.1v1.05h-1.1zM904.4,622.2h1.0v1.05h-1.0zM880.1,623.0h1.1v1.05h-1.1zM871.4,621.5h1.0v1.05h-1.0zM916.7,622.0h1.1v1.05h-1.1zM890.6,622.0h1.1v1.05h-1.1zM907.5,621.3h1.3v1.05h-1.3zM887.4,620.8h1.0v1.05h-1.0zM873.5,621.7h1.3v1.05h-1.3zM885.9,622.1h1.1v1.05h-1.1zM900.0,623.5h1.3v1.05h-1.3zM876.4,623.0h1.3v1.05h-1.3zM890.5,621.0h1.3v1.05h-1.3zM947.7,621.6h1.0v1.05h-1.0zM975.0,622.5h1.0v1.05h-1.0zM967.1,622.0h1.0v1.05h-1.0zM969.2,621.0h1.0v1.05h-1.0zM931.8,621.9h1.3v1.05h-1.3zM949.8,621.6h1.3v1.05h-1.3zM982.3,620.8h1.3v1.05h-1.3zM958.6,623.1h1.3v1.05h-1.3zM959.0,623.6h1.3v1.05h-1.3zM970.3,620.5h1.0v1.05h-1.0zM950.5,622.3h1.1v1.05h-1.1zM962.6,621.6h1.1v1.05h-1.1zM935.8,622.3h1.0v1.05h-1.0zM967.8,621.1h1.3v1.05h-1.3zM949.6,621.2h1.3v1.05h-1.3zM943.5,620.2h1.3v1.05h-1.3zM983.0,620.8h1.3v1.05h-1.3zM968.2,620.4h1.0v1.05h-1.0zM976.2,620.8h1.1v1.05h-1.1zM941.5,622.1h1.0v1.05h-1.0zM971.9,619.6h1.3v1.05h-1.3zM933.1,620.7h1.1v1.05h-1.1zM940.1,621.9h1.0v1.05h-1.0zM936.5,623.2h1.0v1.05h-1.0zM971.7,622.5h1.0v1.05h-1.0zM949.0,621.0h1.0v1.05h-1.0zM977.1,620.8h1.3v1.05h-1.3zM941.7,620.4h1.0v1.05h-1.0zM999.7,620.9h1.1v1.05h-1.1zM1005.2,621.6h1.3v1.05h-1.3zM1008.6,622.2h1.3v1.05h-1.3zM1001.2,623.0h1.0v1.05h-1.0zM994.3,620.6h1.0v1.05h-1.0zM987.2,623.6h1.1v1.05h-1.1zM999.3,620.5h1.1v1.05h-1.1zM987.4,621.4h1.1v1.05h-1.1zM1054.4,621.8h1.1v1.05h-1.1zM1035.2,620.9h1.0v1.05h-1.0zM1038.0,620.6h1.0v1.05h-1.0zM1013.6,621.5h1.0v1.05h-1.0zM1026.7,622.5h1.1v1.05h-1.1zM1027.5,620.8h1.3v1.05h-1.3zM1042.0,620.9h1.3v1.05h-1.3zM1041.6,621.6h1.1v1.05h-1.1zM1122.0,621.7h1.0v1.05h-1.0zM1064.9,622.5h1.1v1.05h-1.1zM1054.3,622.5h1.3v1.05h-1.3zM1019.4,622.0h1.3v1.05h-1.3zM1025.5,621.1h1.0v1.05h-1.0zM1048.1,621.6h1.1v1.05h-1.1zM1090.4,622.0h1.1v1.05h-1.1zM1079.1,621.5h1.1v1.05h-1.1zM1086.5,620.7h1.3v1.05h-1.3zM1125.5,588.0h1.2v1.2h-1.2zM998.6,599.5h1.2v1.2h-1.2zM902.0,635.2h1.2v1.2h-1.2zM887.0,604.0h1.2v1.2h-1.2zM1093.4,606.6h1.2v1.2h-1.2zM1095.4,608.4h1.2v1.2h-1.2zM810.0,605.5h1.2v1.2h-1.2zM726.0,606.0h1.2v1.2h-1.2z" fill="#dada00"/><polyline points="680.6,243.9 685.2,280.6 689.8,226.7 693.3,255.3 696.6,273.3 699.1,243.0 701.0,239.8 703.2,246.3 705.9,293.7 708.1,248.8 710.5,238.1 713.0,238.9 715.4,234.0 717.9,240.6 720.3,275.7 722.8,245.5 724.4,197.3 726.9,216.1 729.0,243.0 731.4,227.5 734.2,271.6 736.7,222.6 738.6,198.1 741.6,221.8 743.2,201.3 746.5,237.3 748.1,238.1 750.2,216.1 752.5,237.3 755.0,266.7 757.4,245.5 760.4,264.3 762.8,225.9 764.8,210.3 766.6,227.5 769.4,228.3 773.1,211.2 775.1,232.4 776.7,256.9 778.4,238.9 780.5,259.4 783.3,225.1 785.4,249.6 790.3,210.3 792.7,247.1 795.0,224.2 796.6,238.9 799.5,214.4 802.0,219.3 804.4,215.2 807.7,215.2 811.0,221.0 815.6,202.2 818.3,209.5 820.8,222.6 822.4,219.3 827.3,234.0 829.8,265.1 832.7,232.4 837.1,227.5 839.6,241.4 841.7,225.1 845.3,241.4 848.6,230.8 851.5,209.5 853.8,221.8 857.6,273.3 860.8,253.7 864.4,240.6 867.4,268.4 869.8,256.1 871.8,272.5 874.2,263.5 876.4,237.3 878.8,225.9 882.9,231.6 886.2,214.4 889.9,225.1 893.5,202.2 897.3,197.3 900.1,212.8 902.2,231.6 904.7,212.8 909.4,270.0 913.6,232.4 916.4,283.1 919.6,207.1 923.4,240.6 925.3,198.1 927.8,197.3 930.3,204.6 932.7,198.1 935.2,205.4 937.1,238.9 941.7,232.4 947.4,252.8 950.7,255.3 954.8,273.3 957.2,256.9 962.6,207.1 965.4,270.0 968.2,214.4 970.3,235.7 972.4,225.9 975.2,249.6 976.8,246.3 979.8,277.4 982.6,237.3 985.8,207.1 988.6,230.0 991.6,198.1 994.0,204.6 998.4,227.5 1002.2,204.6 1005.1,194.8 1007.1,220.1 1010.4,228.3 1015.3,223.4 1017.7,225.9 1021.8,243.9 1024.3,209.5 1025.9,219.3 1028.8,204.6 1031.0,250.7 1033.0,226.0 1035.6,272.9 1040.4,225.1 1049.4,197.8 1053.7,247.3 1056.1,220.0 1059.2,209.8 1063.4,264.4 1065.6,226.0 1070.8,237.9 1075.4,194.4 1077.9,202.1 1079.6,199.5 1082.2,210.6 1084.4,211.5 1087.3,221.7 1089.9,290.9 1091.9,240.5 1094.2,248.2 1096.4,209.8 1098.4,204.6 1101.0,226.0 1103.6,242.2 1106.1,289.2 1108.7,275.5 1110.4,291.7 1112.9,256.7 1117.7,253.3 1120.3,226.8 1121.5,256.7 1124.9,290.9 1127.5,283.2 1131.2,279.8 1133.8,239.6 1136.3,293.4 1138.9,291.7 1143.7,234.5 1145.7,237.1" fill="none" stroke="#17a8dd" stroke-width="1.1" stroke-linejoin="round"/></svg>
<span class="t" style="left:659.24px;top:150px;font-size:9.8px;letter-spacing:-0.45px;">350</span>
<span class="t" style="left:659.24px;top:219px;font-size:9.8px;letter-spacing:-0.45px;">300</span>
<span class="t" style="left:659.24px;top:289px;font-size:9.8px;letter-spacing:-0.45px;">250</span>
<span class="t" style="left:659.24px;top:359px;font-size:9.8px;letter-spacing:-0.45px;">200</span>
<span class="t" style="left:659.24px;top:429px;font-size:9.8px;letter-spacing:-0.45px;">150</span>
<span class="t" style="left:659.24px;top:499px;font-size:9.8px;letter-spacing:-0.45px;">100</span>
<span class="t" style="left:664.69px;top:568px;font-size:9.8px;letter-spacing:-0.45px;">50</span>
<span class="t" style="left:1150.40px;top:150px;font-size:9.8px;letter-spacing:-0.45px;">3.50</span>
<span class="t" style="left:1150.40px;top:219px;font-size:9.8px;letter-spacing:-0.45px;">3.00</span>
<span class="t" style="left:1150.40px;top:289px;font-size:9.8px;letter-spacing:-0.45px;">2.50</span>
<span class="t" style="left:1150.40px;top:359px;font-size:9.8px;letter-spacing:-0.45px;">2.00</span>
<span class="t" style="left:1150.40px;top:429px;font-size:9.8px;letter-spacing:-0.45px;">1.50</span>
<span class="t" style="left:1150.40px;top:499px;font-size:9.8px;letter-spacing:-0.45px;">1.00</span>
<span class="t" style="left:1150.40px;top:568px;font-size:9.8px;letter-spacing:-0.45px;">0.50</span>
<span class="t" style="left:677.77px;top:649px;font-size:9.8px;letter-spacing:-0.45px;">0</span>
<span class="t" style="left:721.55px;top:649px;font-size:9.8px;letter-spacing:-0.45px;">12</span>
<span class="t" style="left:768.05px;top:649px;font-size:9.8px;letter-spacing:-0.45px;">24</span>
<span class="t" style="left:814.55px;top:649px;font-size:9.8px;letter-spacing:-0.45px;">36</span>
<span class="t" style="left:861.05px;top:649px;font-size:9.8px;letter-spacing:-0.45px;">48</span>
<span class="t" style="left:907.55px;top:649px;font-size:9.8px;letter-spacing:-0.45px;">60</span>
<span class="t" style="left:954.05px;top:649px;font-size:9.8px;letter-spacing:-0.45px;">72</span>
<span class="t" style="left:1000.55px;top:649px;font-size:9.8px;letter-spacing:-0.45px;">84</span>
<span class="t" style="left:1047.05px;top:649px;font-size:9.8px;letter-spacing:-0.45px;">96</span>
<span class="t" style="left:1090.82px;top:649px;font-size:9.8px;letter-spacing:-0.45px;">108</span>
<span class="t" style="left:1132.60px;top:649px;font-size:9.8px;transform:scaleX(0.9173);transform-origin:0 0;">120gB</span>
<span class="t" style="left:680.50px;top:143px;font-size:9.8px;transform:scaleX(0.9316);transform-origin:0 0;">MB/s</span>
<span class="t" style="left:1133.75px;top:143px;font-size:9.8px;transform:scaleX(0.9110);transform-origin:0 0;">ms</span>
<div style="left:1184px;top:136.5px;width:65px;height:18.30000000000001px;border:1px solid #adadad;box-sizing:border-box;background:#e1e1e1;"></div>
<span class="t" style="left:1206.75px;top:142px;font-size:11px;transform:scaleX(0.7962);transform-origin:0 0;">Start</span>
<div style="left:1176px;top:164.2px;width:90px;height:1px;background:#a8a8a8;"></div>
<div style="left:1176px;top:198.5px;width:90px;height:1px;background:#a8a8a8;"></div>
<div style="left:1176px;top:262.5px;width:90px;height:1px;background:#a8a8a8;"></div>
<div style="left:1176px;top:355.8px;width:90px;height:1px;background:#a8a8a8;"></div>
<svg class="ic" style="left:1180.3px;top:169.5px" width="11.2" height="11.2" viewBox="0 0 12 12"><circle cx="6" cy="6" r="5.2" fill="#fff" stroke="#2c2c2c" stroke-width="1.25"/><circle cx="6" cy="6" r="2.7" fill="#1a1a1a"/></svg>
<svg class="ic" style="left:1180.3px;top:183.9px" width="11.2" height="11.2" viewBox="0 0 12 12"><circle cx="6" cy="6" r="5.2" fill="#fff" stroke="#2c2c2c" stroke-width="1.25"/></svg>
<svg class="ic" style="left:1180.3px;top:206.2px" width="11.2" height="11.2" viewBox="0 0 12 12"><rect x="0.6" y="0.6" width="10.8" height="10.8" fill="#fff" stroke="#333" stroke-width="1.1"/></svg>
<svg class="ic" style="left:1180.3px;top:249.6px" width="11.2" height="11.2" viewBox="0 0 12 12"><rect x="0.6" y="0.6" width="10.8" height="10.8" fill="#fff" stroke="#333" stroke-width="1.1"/><path d="M2.6,6 L5,8.6 L9.6,2.8" fill="none" stroke="#111" stroke-width="1.2"/></svg>
<svg class="ic" style="left:1180.3px;top:361.2px" width="11.2" height="11.2" viewBox="0 0 12 12"><rect x="0.6" y="0.6" width="10.8" height="10.8" fill="#fff" stroke="#333" stroke-width="1.1"/><path d="M2.6,6 L5,8.6 L9.6,2.8" fill="none" stroke="#111" stroke-width="1.2"/></svg>
<svg class="ic" style="left:1180.3px;top:391.5px" width="11.2" height="11.2" viewBox="0 0 12 12"><rect x="0.6" y="0.6" width="10.8" height="10.8" fill="#fff" stroke="#333" stroke-width="1.1"/><path d="M2.6,6 L5,8.6 L9.6,2.8" fill="none" stroke="#111" stroke-width="1.2"/></svg>
<span class="t" style="left:1194.80px;top:171px;font-size:11px;transform:scaleX(0.8518);transform-origin:0 0;">Read</span>
<span class="t" style="left:1194.80px;top:185px;font-size:11px;transform:scaleX(0.8481);transform-origin:0 0;">Write</span>
<span class="t" style="left:1194.80px;top:208px;font-size:11px;transform:scaleX(0.8464);transform-origin:0 0;">Short stroke</span>
<span class="t" style="left:1245.30px;top:229px;font-size:11px;transform:scaleX(0.8910);transform-origin:0 0;">gB</span>
<span class="t" style="left:1194.80px;top:251px;font-size:11px;transform:scaleX(0.8424);transform-origin:0 0;">Transfer rate</span>
<span class="t" style="left:1181.00px;top:267px;font-size:11px;transform:scaleX(0.7888);transform-origin:0 0;">Minimum</span>
<span class="t" style="left:1181.00px;top:297px;font-size:11px;transform:scaleX(0.7971);transform-origin:0 0;">Maximum</span>
<span class="t" style="left:1181.00px;top:324px;font-size:11px;transform:scaleX(0.8484);transform-origin:0 0;">Average</span>
<span class="t" style="left:1194.80px;top:363px;font-size:11px;transform:scaleX(0.8466);transform-origin:0 0;">Access time</span>
<span class="t" style="left:1194.80px;top:393px;font-size:11px;transform:scaleX(0.8220);transform-origin:0 0;">Burst rate</span>
<span class="t" style="left:1180.00px;top:423px;font-size:11px;transform:scaleX(0.8495);transform-origin:0 0;">CPU usage</span>
<div style="left:1180.4px;top:224px;width:55.09999999999991px;height:17px;background:#fff;border:1px solid #d2d2d2;box-sizing:border-box;"></div>
<div style="left:1220.9px;top:225px;width:13.6px;height:15px;background:linear-gradient(#e9e9e9 0%,#e2e2e2 46%,#f4f4f4 50%,#e9e9e9 54%,#e0e0e0 100%);border-left:1px solid #dcdcdc;box-sizing:border-box;"></div>
<svg class="ic" style="left:1223.5px;top:225.5px" width="8" height="14" viewBox="0 0 8 14"><path d="M1.6,5 L4,2.4 L6.4,5Z M1.6,9 L4,11.6 L6.4,9Z" fill="#444"/></svg>
<span class="t" style="left:1183.90px;top:228px;font-size:11px;color:#9a9a9a;transform:scaleX(0.8571);transform-origin:0 0;">40</span>
<div style="left:1181px;top:279.8px;width:81.79999999999995px;height:12.199999999999989px;background:#000;"></div>
<span class="t" style="left:1192.40px;top:282px;font-size:10.2px;font-weight:bold;color:#18b4ff;transform:scaleX(1.1069);transform-origin:0 0;">248.5 MB/s</span>
<div style="left:1181px;top:308px;width:81.79999999999995px;height:12.600000000000023px;background:#000;"></div>
<span class="t" style="left:1192.40px;top:311px;font-size:10.2px;font-weight:bold;color:#18b4ff;transform:scaleX(1.1069);transform-origin:0 0;">320.5 MB/s</span>
<div style="left:1181px;top:335.8px;width:81.79999999999995px;height:12.599999999999966px;background:#000;"></div>
<span class="t" style="left:1192.40px;top:338px;font-size:10.2px;font-weight:bold;color:#18b4ff;transform:scaleX(1.1069);transform-origin:0 0;">290.7 MB/s</span>
<div style="left:1181px;top:375.3px;width:81.79999999999995px;height:12.300000000000011px;background:#000;"></div>
<span class="t" style="left:1199.70px;top:378px;font-size:10.2px;font-weight:bold;color:#f0f000;transform:scaleX(1.0520);transform-origin:0 0;">0.188 ms</span>
<div style="left:1181px;top:405.6px;width:81.79999999999995px;height:12.199999999999989px;background:#000;"></div>
<span class="t" style="left:1193.50px;top:408px;font-size:10.2px;font-weight:bold;color:#fff;transform:scaleX(1.1097);transform-origin:0 0;">111.1 MB/s</span>
<div style="left:1181px;top:435px;width:81.79999999999995px;height:12.300000000000011px;background:#000;"></div>
<span class="t" style="left:1207.70px;top:438px;font-size:10.2px;font-weight:bold;color:#fff;transform:scaleX(1.0072);transform-origin:0 0;">12.7%</span>
<svg class="ic" style="left:0;top:0" width="1280" height="673"><path d="M47.00,638.8 v2.5M69.70,638.8 v1.5M92.40,638.8 v2.5M115.10,638.8 v1.5M137.80,638.8 v2.5M160.50,638.8 v1.5M183.20,638.8 v2.5M205.90,638.8 v1.5M228.60,638.8 v2.5M251.30,638.8 v1.5M274.00,638.8 v2.5M296.70,638.8 v1.5M319.40,638.8 v2.5M342.10,638.8 v1.5M364.80,638.8 v2.5M387.50,638.8 v1.5M410.20,638.8 v2.5M432.90,638.8 v1.5M455.60,638.8 v2.5M478.30,638.8 v1.5M501.00,638.8 v2.5M680.50,644.2 v2.5M703.75,644.2 v1.5M727.00,644.2 v2.5M750.25,644.2 v1.5M773.50,644.2 v2.5M796.75,644.2 v1.5M820.00,644.2 v2.5M843.25,644.2 v1.5M866.50,644.2 v2.5M889.75,644.2 v1.5M913.00,644.2 v2.5M936.25,644.2 v1.5M959.50,644.2 v2.5M982.75,644.2 v1.5M1006.00,644.2 v2.5M1029.25,644.2 v1.5M1052.50,644.2 v2.5M1075.75,644.2 v1.5M1099.00,644.2 v2.5M1122.25,644.2 v1.5M1145.50,644.2 v2.5" stroke="#666" stroke-width="1" fill="none"/></svg>
</div></body></html>
